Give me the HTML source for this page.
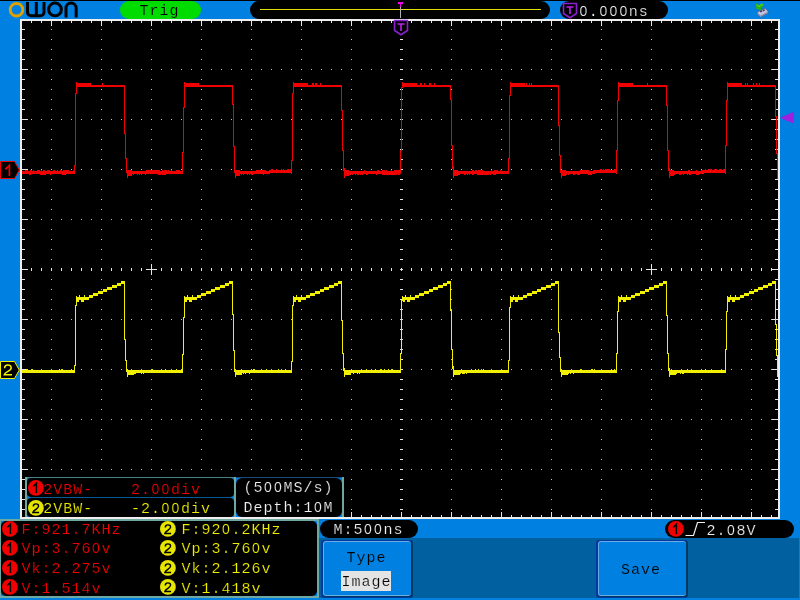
<!DOCTYPE html>
<html><head><meta charset="utf-8"><title>OWON</title>
<style>
html,body{margin:0;padding:0;}
body{width:800px;height:600px;overflow:hidden;background:#0080E0;position:relative;font-family:"Liberation Mono",monospace;font-size:16px;line-height:16px;}
div,span,svg{position:absolute;box-sizing:border-box;}
.t{margin-top:1px;white-space:pre;font-size:15px;letter-spacing:1px;line-height:16px;height:16px;transform:translateZ(0);}
.z{line-height:0;font-style:normal;font-family:"Liberation Sans",sans-serif;font-size:14px;display:inline-block;width:9px;letter-spacing:0;text-align:center;margin-right:1px;}
.pill{background:#000;border-radius:9px;height:18px;}
.frame{left:20px;top:19px;width:760px;height:500px;background:#000;border:2px solid #EEEEEE;}
.plot{left:0;top:0;}
.circ{width:16px;height:16px;border-radius:8px;font-family:"Liberation Sans",sans-serif;font-size:15px;line-height:16px;text-align:center;color:#000;}
.c1{background:#F00000;}
.c2{background:#E8E800;}
.red{color:#F00000;-webkit-text-stroke:0.2px #000;}
.yel{color:#F0F000;-webkit-text-stroke:0.2px #000;}
.wht{color:#F0F0F0;-webkit-text-stroke:0.2px #000;}
.teal{background:#6FA8A0;}
.blk{background:#000;border-radius:5px;}
.btn{background:#0080E0;border-radius:3px;border-top:2px solid #58A8F0;border-left:2px solid #58A8F0;border-right:2px solid #003C80;border-bottom:2px solid #003C80;}
</style></head><body>
<!-- top line -->
<div style="left:0;top:0;width:800px;height:1px;background:#000"></div>

<!-- frame -->
<div class="frame"></div>
<svg class="plot" width="800" height="600" viewBox="0 0 800 600" shape-rendering="crispEdges">
<path fill="#C4C4C4" d="M51 29h1v1h-1zM51 39h1v1h-1zM51 49h1v1h-1zM51 59h1v1h-1zM51 69h1v1h-1zM51 79h1v1h-1zM51 89h1v1h-1zM51 99h1v1h-1zM51 109h1v1h-1zM51 119h1v1h-1zM51 129h1v1h-1zM51 139h1v1h-1zM51 149h1v1h-1zM51 159h1v1h-1zM51 169h1v1h-1zM51 179h1v1h-1zM51 189h1v1h-1zM51 199h1v1h-1zM51 209h1v1h-1zM51 219h1v1h-1zM51 229h1v1h-1zM51 239h1v1h-1zM51 249h1v1h-1zM51 259h1v1h-1zM51 279h1v1h-1zM51 289h1v1h-1zM51 299h1v1h-1zM51 309h1v1h-1zM51 319h1v1h-1zM51 329h1v1h-1zM51 339h1v1h-1zM51 349h1v1h-1zM51 359h1v1h-1zM51 369h1v1h-1zM51 379h1v1h-1zM51 389h1v1h-1zM51 399h1v1h-1zM51 409h1v1h-1zM51 419h1v1h-1zM51 429h1v1h-1zM51 439h1v1h-1zM51 449h1v1h-1zM51 459h1v1h-1zM51 469h1v1h-1zM51 479h1v1h-1zM51 489h1v1h-1zM51 499h1v1h-1zM51 509h1v1h-1zM101 29h1v1h-1zM101 39h1v1h-1zM101 49h1v1h-1zM101 59h1v1h-1zM101 69h1v1h-1zM101 79h1v1h-1zM101 89h1v1h-1zM101 99h1v1h-1zM101 109h1v1h-1zM101 119h1v1h-1zM101 129h1v1h-1zM101 139h1v1h-1zM101 149h1v1h-1zM101 159h1v1h-1zM101 169h1v1h-1zM101 179h1v1h-1zM101 189h1v1h-1zM101 199h1v1h-1zM101 209h1v1h-1zM101 219h1v1h-1zM101 229h1v1h-1zM101 239h1v1h-1zM101 249h1v1h-1zM101 259h1v1h-1zM101 279h1v1h-1zM101 289h1v1h-1zM101 299h1v1h-1zM101 309h1v1h-1zM101 319h1v1h-1zM101 329h1v1h-1zM101 339h1v1h-1zM101 349h1v1h-1zM101 359h1v1h-1zM101 369h1v1h-1zM101 379h1v1h-1zM101 389h1v1h-1zM101 399h1v1h-1zM101 409h1v1h-1zM101 419h1v1h-1zM101 429h1v1h-1zM101 439h1v1h-1zM101 449h1v1h-1zM101 459h1v1h-1zM101 469h1v1h-1zM101 479h1v1h-1zM101 489h1v1h-1zM101 499h1v1h-1zM101 509h1v1h-1zM151 29h1v1h-1zM151 39h1v1h-1zM151 49h1v1h-1zM151 59h1v1h-1zM151 69h1v1h-1zM151 79h1v1h-1zM151 89h1v1h-1zM151 99h1v1h-1zM151 109h1v1h-1zM151 119h1v1h-1zM151 129h1v1h-1zM151 139h1v1h-1zM151 149h1v1h-1zM151 159h1v1h-1zM151 169h1v1h-1zM151 179h1v1h-1zM151 189h1v1h-1zM151 199h1v1h-1zM151 209h1v1h-1zM151 219h1v1h-1zM151 229h1v1h-1zM151 239h1v1h-1zM151 249h1v1h-1zM151 259h1v1h-1zM151 279h1v1h-1zM151 289h1v1h-1zM151 299h1v1h-1zM151 309h1v1h-1zM151 319h1v1h-1zM151 329h1v1h-1zM151 339h1v1h-1zM151 349h1v1h-1zM151 359h1v1h-1zM151 369h1v1h-1zM151 379h1v1h-1zM151 389h1v1h-1zM151 399h1v1h-1zM151 409h1v1h-1zM151 419h1v1h-1zM151 429h1v1h-1zM151 439h1v1h-1zM151 449h1v1h-1zM151 459h1v1h-1zM151 469h1v1h-1zM151 479h1v1h-1zM151 489h1v1h-1zM151 499h1v1h-1zM151 509h1v1h-1zM201 29h1v1h-1zM201 39h1v1h-1zM201 49h1v1h-1zM201 59h1v1h-1zM201 69h1v1h-1zM201 79h1v1h-1zM201 89h1v1h-1zM201 99h1v1h-1zM201 109h1v1h-1zM201 119h1v1h-1zM201 129h1v1h-1zM201 139h1v1h-1zM201 149h1v1h-1zM201 159h1v1h-1zM201 169h1v1h-1zM201 179h1v1h-1zM201 189h1v1h-1zM201 199h1v1h-1zM201 209h1v1h-1zM201 219h1v1h-1zM201 229h1v1h-1zM201 239h1v1h-1zM201 249h1v1h-1zM201 259h1v1h-1zM201 279h1v1h-1zM201 289h1v1h-1zM201 299h1v1h-1zM201 309h1v1h-1zM201 319h1v1h-1zM201 329h1v1h-1zM201 339h1v1h-1zM201 349h1v1h-1zM201 359h1v1h-1zM201 369h1v1h-1zM201 379h1v1h-1zM201 389h1v1h-1zM201 399h1v1h-1zM201 409h1v1h-1zM201 419h1v1h-1zM201 429h1v1h-1zM201 439h1v1h-1zM201 449h1v1h-1zM201 459h1v1h-1zM201 469h1v1h-1zM201 479h1v1h-1zM201 489h1v1h-1zM201 499h1v1h-1zM201 509h1v1h-1zM251 29h1v1h-1zM251 39h1v1h-1zM251 49h1v1h-1zM251 59h1v1h-1zM251 69h1v1h-1zM251 79h1v1h-1zM251 89h1v1h-1zM251 99h1v1h-1zM251 109h1v1h-1zM251 119h1v1h-1zM251 129h1v1h-1zM251 139h1v1h-1zM251 149h1v1h-1zM251 159h1v1h-1zM251 169h1v1h-1zM251 179h1v1h-1zM251 189h1v1h-1zM251 199h1v1h-1zM251 209h1v1h-1zM251 219h1v1h-1zM251 229h1v1h-1zM251 239h1v1h-1zM251 249h1v1h-1zM251 259h1v1h-1zM251 279h1v1h-1zM251 289h1v1h-1zM251 299h1v1h-1zM251 309h1v1h-1zM251 319h1v1h-1zM251 329h1v1h-1zM251 339h1v1h-1zM251 349h1v1h-1zM251 359h1v1h-1zM251 369h1v1h-1zM251 379h1v1h-1zM251 389h1v1h-1zM251 399h1v1h-1zM251 409h1v1h-1zM251 419h1v1h-1zM251 429h1v1h-1zM251 439h1v1h-1zM251 449h1v1h-1zM251 459h1v1h-1zM251 469h1v1h-1zM251 479h1v1h-1zM251 489h1v1h-1zM251 499h1v1h-1zM251 509h1v1h-1zM301 29h1v1h-1zM301 39h1v1h-1zM301 49h1v1h-1zM301 59h1v1h-1zM301 69h1v1h-1zM301 79h1v1h-1zM301 89h1v1h-1zM301 99h1v1h-1zM301 109h1v1h-1zM301 119h1v1h-1zM301 129h1v1h-1zM301 139h1v1h-1zM301 149h1v1h-1zM301 159h1v1h-1zM301 169h1v1h-1zM301 179h1v1h-1zM301 189h1v1h-1zM301 199h1v1h-1zM301 209h1v1h-1zM301 219h1v1h-1zM301 229h1v1h-1zM301 239h1v1h-1zM301 249h1v1h-1zM301 259h1v1h-1zM301 279h1v1h-1zM301 289h1v1h-1zM301 299h1v1h-1zM301 309h1v1h-1zM301 319h1v1h-1zM301 329h1v1h-1zM301 339h1v1h-1zM301 349h1v1h-1zM301 359h1v1h-1zM301 369h1v1h-1zM301 379h1v1h-1zM301 389h1v1h-1zM301 399h1v1h-1zM301 409h1v1h-1zM301 419h1v1h-1zM301 429h1v1h-1zM301 439h1v1h-1zM301 449h1v1h-1zM301 459h1v1h-1zM301 469h1v1h-1zM301 479h1v1h-1zM301 489h1v1h-1zM301 499h1v1h-1zM301 509h1v1h-1zM351 29h1v1h-1zM351 39h1v1h-1zM351 49h1v1h-1zM351 59h1v1h-1zM351 69h1v1h-1zM351 79h1v1h-1zM351 89h1v1h-1zM351 99h1v1h-1zM351 109h1v1h-1zM351 119h1v1h-1zM351 129h1v1h-1zM351 139h1v1h-1zM351 149h1v1h-1zM351 159h1v1h-1zM351 169h1v1h-1zM351 179h1v1h-1zM351 189h1v1h-1zM351 199h1v1h-1zM351 209h1v1h-1zM351 219h1v1h-1zM351 229h1v1h-1zM351 239h1v1h-1zM351 249h1v1h-1zM351 259h1v1h-1zM351 279h1v1h-1zM351 289h1v1h-1zM351 299h1v1h-1zM351 309h1v1h-1zM351 319h1v1h-1zM351 329h1v1h-1zM351 339h1v1h-1zM351 349h1v1h-1zM351 359h1v1h-1zM351 369h1v1h-1zM351 379h1v1h-1zM351 389h1v1h-1zM351 399h1v1h-1zM351 409h1v1h-1zM351 419h1v1h-1zM351 429h1v1h-1zM351 439h1v1h-1zM351 449h1v1h-1zM351 459h1v1h-1zM351 469h1v1h-1zM351 479h1v1h-1zM351 489h1v1h-1zM351 499h1v1h-1zM351 509h1v1h-1zM451 29h1v1h-1zM451 39h1v1h-1zM451 49h1v1h-1zM451 59h1v1h-1zM451 69h1v1h-1zM451 79h1v1h-1zM451 89h1v1h-1zM451 99h1v1h-1zM451 109h1v1h-1zM451 119h1v1h-1zM451 129h1v1h-1zM451 139h1v1h-1zM451 149h1v1h-1zM451 159h1v1h-1zM451 169h1v1h-1zM451 179h1v1h-1zM451 189h1v1h-1zM451 199h1v1h-1zM451 209h1v1h-1zM451 219h1v1h-1zM451 229h1v1h-1zM451 239h1v1h-1zM451 249h1v1h-1zM451 259h1v1h-1zM451 279h1v1h-1zM451 289h1v1h-1zM451 299h1v1h-1zM451 309h1v1h-1zM451 319h1v1h-1zM451 329h1v1h-1zM451 339h1v1h-1zM451 349h1v1h-1zM451 359h1v1h-1zM451 369h1v1h-1zM451 379h1v1h-1zM451 389h1v1h-1zM451 399h1v1h-1zM451 409h1v1h-1zM451 419h1v1h-1zM451 429h1v1h-1zM451 439h1v1h-1zM451 449h1v1h-1zM451 459h1v1h-1zM451 469h1v1h-1zM451 479h1v1h-1zM451 489h1v1h-1zM451 499h1v1h-1zM451 509h1v1h-1zM501 29h1v1h-1zM501 39h1v1h-1zM501 49h1v1h-1zM501 59h1v1h-1zM501 69h1v1h-1zM501 79h1v1h-1zM501 89h1v1h-1zM501 99h1v1h-1zM501 109h1v1h-1zM501 119h1v1h-1zM501 129h1v1h-1zM501 139h1v1h-1zM501 149h1v1h-1zM501 159h1v1h-1zM501 169h1v1h-1zM501 179h1v1h-1zM501 189h1v1h-1zM501 199h1v1h-1zM501 209h1v1h-1zM501 219h1v1h-1zM501 229h1v1h-1zM501 239h1v1h-1zM501 249h1v1h-1zM501 259h1v1h-1zM501 279h1v1h-1zM501 289h1v1h-1zM501 299h1v1h-1zM501 309h1v1h-1zM501 319h1v1h-1zM501 329h1v1h-1zM501 339h1v1h-1zM501 349h1v1h-1zM501 359h1v1h-1zM501 369h1v1h-1zM501 379h1v1h-1zM501 389h1v1h-1zM501 399h1v1h-1zM501 409h1v1h-1zM501 419h1v1h-1zM501 429h1v1h-1zM501 439h1v1h-1zM501 449h1v1h-1zM501 459h1v1h-1zM501 469h1v1h-1zM501 479h1v1h-1zM501 489h1v1h-1zM501 499h1v1h-1zM501 509h1v1h-1zM551 29h1v1h-1zM551 39h1v1h-1zM551 49h1v1h-1zM551 59h1v1h-1zM551 69h1v1h-1zM551 79h1v1h-1zM551 89h1v1h-1zM551 99h1v1h-1zM551 109h1v1h-1zM551 119h1v1h-1zM551 129h1v1h-1zM551 139h1v1h-1zM551 149h1v1h-1zM551 159h1v1h-1zM551 169h1v1h-1zM551 179h1v1h-1zM551 189h1v1h-1zM551 199h1v1h-1zM551 209h1v1h-1zM551 219h1v1h-1zM551 229h1v1h-1zM551 239h1v1h-1zM551 249h1v1h-1zM551 259h1v1h-1zM551 279h1v1h-1zM551 289h1v1h-1zM551 299h1v1h-1zM551 309h1v1h-1zM551 319h1v1h-1zM551 329h1v1h-1zM551 339h1v1h-1zM551 349h1v1h-1zM551 359h1v1h-1zM551 369h1v1h-1zM551 379h1v1h-1zM551 389h1v1h-1zM551 399h1v1h-1zM551 409h1v1h-1zM551 419h1v1h-1zM551 429h1v1h-1zM551 439h1v1h-1zM551 449h1v1h-1zM551 459h1v1h-1zM551 469h1v1h-1zM551 479h1v1h-1zM551 489h1v1h-1zM551 499h1v1h-1zM551 509h1v1h-1zM601 29h1v1h-1zM601 39h1v1h-1zM601 49h1v1h-1zM601 59h1v1h-1zM601 69h1v1h-1zM601 79h1v1h-1zM601 89h1v1h-1zM601 99h1v1h-1zM601 109h1v1h-1zM601 119h1v1h-1zM601 129h1v1h-1zM601 139h1v1h-1zM601 149h1v1h-1zM601 159h1v1h-1zM601 169h1v1h-1zM601 179h1v1h-1zM601 189h1v1h-1zM601 199h1v1h-1zM601 209h1v1h-1zM601 219h1v1h-1zM601 229h1v1h-1zM601 239h1v1h-1zM601 249h1v1h-1zM601 259h1v1h-1zM601 279h1v1h-1zM601 289h1v1h-1zM601 299h1v1h-1zM601 309h1v1h-1zM601 319h1v1h-1zM601 329h1v1h-1zM601 339h1v1h-1zM601 349h1v1h-1zM601 359h1v1h-1zM601 369h1v1h-1zM601 379h1v1h-1zM601 389h1v1h-1zM601 399h1v1h-1zM601 409h1v1h-1zM601 419h1v1h-1zM601 429h1v1h-1zM601 439h1v1h-1zM601 449h1v1h-1zM601 459h1v1h-1zM601 469h1v1h-1zM601 479h1v1h-1zM601 489h1v1h-1zM601 499h1v1h-1zM601 509h1v1h-1zM651 29h1v1h-1zM651 39h1v1h-1zM651 49h1v1h-1zM651 59h1v1h-1zM651 69h1v1h-1zM651 79h1v1h-1zM651 89h1v1h-1zM651 99h1v1h-1zM651 109h1v1h-1zM651 119h1v1h-1zM651 129h1v1h-1zM651 139h1v1h-1zM651 149h1v1h-1zM651 159h1v1h-1zM651 169h1v1h-1zM651 179h1v1h-1zM651 189h1v1h-1zM651 199h1v1h-1zM651 209h1v1h-1zM651 219h1v1h-1zM651 229h1v1h-1zM651 239h1v1h-1zM651 249h1v1h-1zM651 259h1v1h-1zM651 279h1v1h-1zM651 289h1v1h-1zM651 299h1v1h-1zM651 309h1v1h-1zM651 319h1v1h-1zM651 329h1v1h-1zM651 339h1v1h-1zM651 349h1v1h-1zM651 359h1v1h-1zM651 369h1v1h-1zM651 379h1v1h-1zM651 389h1v1h-1zM651 399h1v1h-1zM651 409h1v1h-1zM651 419h1v1h-1zM651 429h1v1h-1zM651 439h1v1h-1zM651 449h1v1h-1zM651 459h1v1h-1zM651 469h1v1h-1zM651 479h1v1h-1zM651 489h1v1h-1zM651 499h1v1h-1zM651 509h1v1h-1zM701 29h1v1h-1zM701 39h1v1h-1zM701 49h1v1h-1zM701 59h1v1h-1zM701 69h1v1h-1zM701 79h1v1h-1zM701 89h1v1h-1zM701 99h1v1h-1zM701 109h1v1h-1zM701 119h1v1h-1zM701 129h1v1h-1zM701 139h1v1h-1zM701 149h1v1h-1zM701 159h1v1h-1zM701 169h1v1h-1zM701 179h1v1h-1zM701 189h1v1h-1zM701 199h1v1h-1zM701 209h1v1h-1zM701 219h1v1h-1zM701 229h1v1h-1zM701 239h1v1h-1zM701 249h1v1h-1zM701 259h1v1h-1zM701 279h1v1h-1zM701 289h1v1h-1zM701 299h1v1h-1zM701 309h1v1h-1zM701 319h1v1h-1zM701 329h1v1h-1zM701 339h1v1h-1zM701 349h1v1h-1zM701 359h1v1h-1zM701 369h1v1h-1zM701 379h1v1h-1zM701 389h1v1h-1zM701 399h1v1h-1zM701 409h1v1h-1zM701 419h1v1h-1zM701 429h1v1h-1zM701 439h1v1h-1zM701 449h1v1h-1zM701 459h1v1h-1zM701 469h1v1h-1zM701 479h1v1h-1zM701 489h1v1h-1zM701 499h1v1h-1zM701 509h1v1h-1zM751 29h1v1h-1zM751 39h1v1h-1zM751 49h1v1h-1zM751 59h1v1h-1zM751 69h1v1h-1zM751 79h1v1h-1zM751 89h1v1h-1zM751 99h1v1h-1zM751 109h1v1h-1zM751 119h1v1h-1zM751 129h1v1h-1zM751 139h1v1h-1zM751 149h1v1h-1zM751 159h1v1h-1zM751 169h1v1h-1zM751 179h1v1h-1zM751 189h1v1h-1zM751 199h1v1h-1zM751 209h1v1h-1zM751 219h1v1h-1zM751 229h1v1h-1zM751 239h1v1h-1zM751 249h1v1h-1zM751 259h1v1h-1zM751 279h1v1h-1zM751 289h1v1h-1zM751 299h1v1h-1zM751 309h1v1h-1zM751 319h1v1h-1zM751 329h1v1h-1zM751 339h1v1h-1zM751 349h1v1h-1zM751 359h1v1h-1zM751 369h1v1h-1zM751 379h1v1h-1zM751 389h1v1h-1zM751 399h1v1h-1zM751 409h1v1h-1zM751 419h1v1h-1zM751 429h1v1h-1zM751 439h1v1h-1zM751 449h1v1h-1zM751 459h1v1h-1zM751 469h1v1h-1zM751 479h1v1h-1zM751 489h1v1h-1zM751 499h1v1h-1zM751 509h1v1h-1zM31 69h1v1h-1zM41 69h1v1h-1zM61 69h1v1h-1zM71 69h1v1h-1zM81 69h1v1h-1zM91 69h1v1h-1zM111 69h1v1h-1zM121 69h1v1h-1zM131 69h1v1h-1zM141 69h1v1h-1zM161 69h1v1h-1zM171 69h1v1h-1zM181 69h1v1h-1zM191 69h1v1h-1zM211 69h1v1h-1zM221 69h1v1h-1zM231 69h1v1h-1zM241 69h1v1h-1zM261 69h1v1h-1zM271 69h1v1h-1zM281 69h1v1h-1zM291 69h1v1h-1zM311 69h1v1h-1zM321 69h1v1h-1zM331 69h1v1h-1zM341 69h1v1h-1zM361 69h1v1h-1zM371 69h1v1h-1zM381 69h1v1h-1zM391 69h1v1h-1zM411 69h1v1h-1zM421 69h1v1h-1zM431 69h1v1h-1zM441 69h1v1h-1zM461 69h1v1h-1zM471 69h1v1h-1zM481 69h1v1h-1zM491 69h1v1h-1zM511 69h1v1h-1zM521 69h1v1h-1zM531 69h1v1h-1zM541 69h1v1h-1zM561 69h1v1h-1zM571 69h1v1h-1zM581 69h1v1h-1zM591 69h1v1h-1zM611 69h1v1h-1zM621 69h1v1h-1zM631 69h1v1h-1zM641 69h1v1h-1zM661 69h1v1h-1zM671 69h1v1h-1zM681 69h1v1h-1zM691 69h1v1h-1zM711 69h1v1h-1zM721 69h1v1h-1zM731 69h1v1h-1zM741 69h1v1h-1zM761 69h1v1h-1zM771 69h1v1h-1zM31 119h1v1h-1zM41 119h1v1h-1zM61 119h1v1h-1zM71 119h1v1h-1zM81 119h1v1h-1zM91 119h1v1h-1zM111 119h1v1h-1zM121 119h1v1h-1zM131 119h1v1h-1zM141 119h1v1h-1zM161 119h1v1h-1zM171 119h1v1h-1zM181 119h1v1h-1zM191 119h1v1h-1zM211 119h1v1h-1zM221 119h1v1h-1zM231 119h1v1h-1zM241 119h1v1h-1zM261 119h1v1h-1zM271 119h1v1h-1zM281 119h1v1h-1zM291 119h1v1h-1zM311 119h1v1h-1zM321 119h1v1h-1zM331 119h1v1h-1zM341 119h1v1h-1zM361 119h1v1h-1zM371 119h1v1h-1zM381 119h1v1h-1zM391 119h1v1h-1zM411 119h1v1h-1zM421 119h1v1h-1zM431 119h1v1h-1zM441 119h1v1h-1zM461 119h1v1h-1zM471 119h1v1h-1zM481 119h1v1h-1zM491 119h1v1h-1zM511 119h1v1h-1zM521 119h1v1h-1zM531 119h1v1h-1zM541 119h1v1h-1zM561 119h1v1h-1zM571 119h1v1h-1zM581 119h1v1h-1zM591 119h1v1h-1zM611 119h1v1h-1zM621 119h1v1h-1zM631 119h1v1h-1zM641 119h1v1h-1zM661 119h1v1h-1zM671 119h1v1h-1zM681 119h1v1h-1zM691 119h1v1h-1zM711 119h1v1h-1zM721 119h1v1h-1zM731 119h1v1h-1zM741 119h1v1h-1zM761 119h1v1h-1zM771 119h1v1h-1zM31 169h1v1h-1zM41 169h1v1h-1zM61 169h1v1h-1zM71 169h1v1h-1zM81 169h1v1h-1zM91 169h1v1h-1zM111 169h1v1h-1zM121 169h1v1h-1zM131 169h1v1h-1zM141 169h1v1h-1zM161 169h1v1h-1zM171 169h1v1h-1zM181 169h1v1h-1zM191 169h1v1h-1zM211 169h1v1h-1zM221 169h1v1h-1zM231 169h1v1h-1zM241 169h1v1h-1zM261 169h1v1h-1zM271 169h1v1h-1zM281 169h1v1h-1zM291 169h1v1h-1zM311 169h1v1h-1zM321 169h1v1h-1zM331 169h1v1h-1zM341 169h1v1h-1zM361 169h1v1h-1zM371 169h1v1h-1zM381 169h1v1h-1zM391 169h1v1h-1zM411 169h1v1h-1zM421 169h1v1h-1zM431 169h1v1h-1zM441 169h1v1h-1zM461 169h1v1h-1zM471 169h1v1h-1zM481 169h1v1h-1zM491 169h1v1h-1zM511 169h1v1h-1zM521 169h1v1h-1zM531 169h1v1h-1zM541 169h1v1h-1zM561 169h1v1h-1zM571 169h1v1h-1zM581 169h1v1h-1zM591 169h1v1h-1zM611 169h1v1h-1zM621 169h1v1h-1zM631 169h1v1h-1zM641 169h1v1h-1zM661 169h1v1h-1zM671 169h1v1h-1zM681 169h1v1h-1zM691 169h1v1h-1zM711 169h1v1h-1zM721 169h1v1h-1zM731 169h1v1h-1zM741 169h1v1h-1zM761 169h1v1h-1zM771 169h1v1h-1zM31 219h1v1h-1zM41 219h1v1h-1zM61 219h1v1h-1zM71 219h1v1h-1zM81 219h1v1h-1zM91 219h1v1h-1zM111 219h1v1h-1zM121 219h1v1h-1zM131 219h1v1h-1zM141 219h1v1h-1zM161 219h1v1h-1zM171 219h1v1h-1zM181 219h1v1h-1zM191 219h1v1h-1zM211 219h1v1h-1zM221 219h1v1h-1zM231 219h1v1h-1zM241 219h1v1h-1zM261 219h1v1h-1zM271 219h1v1h-1zM281 219h1v1h-1zM291 219h1v1h-1zM311 219h1v1h-1zM321 219h1v1h-1zM331 219h1v1h-1zM341 219h1v1h-1zM361 219h1v1h-1zM371 219h1v1h-1zM381 219h1v1h-1zM391 219h1v1h-1zM411 219h1v1h-1zM421 219h1v1h-1zM431 219h1v1h-1zM441 219h1v1h-1zM461 219h1v1h-1zM471 219h1v1h-1zM481 219h1v1h-1zM491 219h1v1h-1zM511 219h1v1h-1zM521 219h1v1h-1zM531 219h1v1h-1zM541 219h1v1h-1zM561 219h1v1h-1zM571 219h1v1h-1zM581 219h1v1h-1zM591 219h1v1h-1zM611 219h1v1h-1zM621 219h1v1h-1zM631 219h1v1h-1zM641 219h1v1h-1zM661 219h1v1h-1zM671 219h1v1h-1zM681 219h1v1h-1zM691 219h1v1h-1zM711 219h1v1h-1zM721 219h1v1h-1zM731 219h1v1h-1zM741 219h1v1h-1zM761 219h1v1h-1zM771 219h1v1h-1zM31 319h1v1h-1zM41 319h1v1h-1zM61 319h1v1h-1zM71 319h1v1h-1zM81 319h1v1h-1zM91 319h1v1h-1zM111 319h1v1h-1zM121 319h1v1h-1zM131 319h1v1h-1zM141 319h1v1h-1zM161 319h1v1h-1zM171 319h1v1h-1zM181 319h1v1h-1zM191 319h1v1h-1zM211 319h1v1h-1zM221 319h1v1h-1zM231 319h1v1h-1zM241 319h1v1h-1zM261 319h1v1h-1zM271 319h1v1h-1zM281 319h1v1h-1zM291 319h1v1h-1zM311 319h1v1h-1zM321 319h1v1h-1zM331 319h1v1h-1zM341 319h1v1h-1zM361 319h1v1h-1zM371 319h1v1h-1zM381 319h1v1h-1zM391 319h1v1h-1zM411 319h1v1h-1zM421 319h1v1h-1zM431 319h1v1h-1zM441 319h1v1h-1zM461 319h1v1h-1zM471 319h1v1h-1zM481 319h1v1h-1zM491 319h1v1h-1zM511 319h1v1h-1zM521 319h1v1h-1zM531 319h1v1h-1zM541 319h1v1h-1zM561 319h1v1h-1zM571 319h1v1h-1zM581 319h1v1h-1zM591 319h1v1h-1zM611 319h1v1h-1zM621 319h1v1h-1zM631 319h1v1h-1zM641 319h1v1h-1zM661 319h1v1h-1zM671 319h1v1h-1zM681 319h1v1h-1zM691 319h1v1h-1zM711 319h1v1h-1zM721 319h1v1h-1zM731 319h1v1h-1zM741 319h1v1h-1zM761 319h1v1h-1zM771 319h1v1h-1zM31 369h1v1h-1zM41 369h1v1h-1zM61 369h1v1h-1zM71 369h1v1h-1zM81 369h1v1h-1zM91 369h1v1h-1zM111 369h1v1h-1zM121 369h1v1h-1zM131 369h1v1h-1zM141 369h1v1h-1zM161 369h1v1h-1zM171 369h1v1h-1zM181 369h1v1h-1zM191 369h1v1h-1zM211 369h1v1h-1zM221 369h1v1h-1zM231 369h1v1h-1zM241 369h1v1h-1zM261 369h1v1h-1zM271 369h1v1h-1zM281 369h1v1h-1zM291 369h1v1h-1zM311 369h1v1h-1zM321 369h1v1h-1zM331 369h1v1h-1zM341 369h1v1h-1zM361 369h1v1h-1zM371 369h1v1h-1zM381 369h1v1h-1zM391 369h1v1h-1zM411 369h1v1h-1zM421 369h1v1h-1zM431 369h1v1h-1zM441 369h1v1h-1zM461 369h1v1h-1zM471 369h1v1h-1zM481 369h1v1h-1zM491 369h1v1h-1zM511 369h1v1h-1zM521 369h1v1h-1zM531 369h1v1h-1zM541 369h1v1h-1zM561 369h1v1h-1zM571 369h1v1h-1zM581 369h1v1h-1zM591 369h1v1h-1zM611 369h1v1h-1zM621 369h1v1h-1zM631 369h1v1h-1zM641 369h1v1h-1zM661 369h1v1h-1zM671 369h1v1h-1zM681 369h1v1h-1zM691 369h1v1h-1zM711 369h1v1h-1zM721 369h1v1h-1zM731 369h1v1h-1zM741 369h1v1h-1zM761 369h1v1h-1zM771 369h1v1h-1zM31 419h1v1h-1zM41 419h1v1h-1zM61 419h1v1h-1zM71 419h1v1h-1zM81 419h1v1h-1zM91 419h1v1h-1zM111 419h1v1h-1zM121 419h1v1h-1zM131 419h1v1h-1zM141 419h1v1h-1zM161 419h1v1h-1zM171 419h1v1h-1zM181 419h1v1h-1zM191 419h1v1h-1zM211 419h1v1h-1zM221 419h1v1h-1zM231 419h1v1h-1zM241 419h1v1h-1zM261 419h1v1h-1zM271 419h1v1h-1zM281 419h1v1h-1zM291 419h1v1h-1zM311 419h1v1h-1zM321 419h1v1h-1zM331 419h1v1h-1zM341 419h1v1h-1zM361 419h1v1h-1zM371 419h1v1h-1zM381 419h1v1h-1zM391 419h1v1h-1zM411 419h1v1h-1zM421 419h1v1h-1zM431 419h1v1h-1zM441 419h1v1h-1zM461 419h1v1h-1zM471 419h1v1h-1zM481 419h1v1h-1zM491 419h1v1h-1zM511 419h1v1h-1zM521 419h1v1h-1zM531 419h1v1h-1zM541 419h1v1h-1zM561 419h1v1h-1zM571 419h1v1h-1zM581 419h1v1h-1zM591 419h1v1h-1zM611 419h1v1h-1zM621 419h1v1h-1zM631 419h1v1h-1zM641 419h1v1h-1zM661 419h1v1h-1zM671 419h1v1h-1zM681 419h1v1h-1zM691 419h1v1h-1zM711 419h1v1h-1zM721 419h1v1h-1zM731 419h1v1h-1zM741 419h1v1h-1zM761 419h1v1h-1zM771 419h1v1h-1zM31 469h1v1h-1zM41 469h1v1h-1zM61 469h1v1h-1zM71 469h1v1h-1zM81 469h1v1h-1zM91 469h1v1h-1zM111 469h1v1h-1zM121 469h1v1h-1zM131 469h1v1h-1zM141 469h1v1h-1zM161 469h1v1h-1zM171 469h1v1h-1zM181 469h1v1h-1zM191 469h1v1h-1zM211 469h1v1h-1zM221 469h1v1h-1zM231 469h1v1h-1zM241 469h1v1h-1zM261 469h1v1h-1zM271 469h1v1h-1zM281 469h1v1h-1zM291 469h1v1h-1zM311 469h1v1h-1zM321 469h1v1h-1zM331 469h1v1h-1zM341 469h1v1h-1zM361 469h1v1h-1zM371 469h1v1h-1zM381 469h1v1h-1zM391 469h1v1h-1zM411 469h1v1h-1zM421 469h1v1h-1zM431 469h1v1h-1zM441 469h1v1h-1zM461 469h1v1h-1zM471 469h1v1h-1zM481 469h1v1h-1zM491 469h1v1h-1zM511 469h1v1h-1zM521 469h1v1h-1zM531 469h1v1h-1zM541 469h1v1h-1zM561 469h1v1h-1zM571 469h1v1h-1zM581 469h1v1h-1zM591 469h1v1h-1zM611 469h1v1h-1zM621 469h1v1h-1zM631 469h1v1h-1zM641 469h1v1h-1zM661 469h1v1h-1zM671 469h1v1h-1zM681 469h1v1h-1zM691 469h1v1h-1zM711 469h1v1h-1zM721 469h1v1h-1zM731 469h1v1h-1zM741 469h1v1h-1zM761 469h1v1h-1zM771 469h1v1h-1z"/>
<path fill="#E6E6E6" d="M31 21h1v2h-1zM31 515h1v2h-1zM41 21h1v2h-1zM41 515h1v2h-1zM51 21h1v5h-1zM51 512h1v5h-1zM61 21h1v2h-1zM61 515h1v2h-1zM71 21h1v2h-1zM71 515h1v2h-1zM81 21h1v2h-1zM81 515h1v2h-1zM91 21h1v2h-1zM91 515h1v2h-1zM101 21h1v5h-1zM101 512h1v5h-1zM111 21h1v2h-1zM111 515h1v2h-1zM121 21h1v2h-1zM121 515h1v2h-1zM131 21h1v2h-1zM131 515h1v2h-1zM141 21h1v2h-1zM141 515h1v2h-1zM151 21h1v5h-1zM151 512h1v5h-1zM161 21h1v2h-1zM161 515h1v2h-1zM171 21h1v2h-1zM171 515h1v2h-1zM181 21h1v2h-1zM181 515h1v2h-1zM191 21h1v2h-1zM191 515h1v2h-1zM201 21h1v5h-1zM201 512h1v5h-1zM211 21h1v2h-1zM211 515h1v2h-1zM221 21h1v2h-1zM221 515h1v2h-1zM231 21h1v2h-1zM231 515h1v2h-1zM241 21h1v2h-1zM241 515h1v2h-1zM251 21h1v5h-1zM251 512h1v5h-1zM261 21h1v2h-1zM261 515h1v2h-1zM271 21h1v2h-1zM271 515h1v2h-1zM281 21h1v2h-1zM281 515h1v2h-1zM291 21h1v2h-1zM291 515h1v2h-1zM301 21h1v5h-1zM301 512h1v5h-1zM311 21h1v2h-1zM311 515h1v2h-1zM321 21h1v2h-1zM321 515h1v2h-1zM331 21h1v2h-1zM331 515h1v2h-1zM341 21h1v2h-1zM341 515h1v2h-1zM351 21h1v5h-1zM351 512h1v5h-1zM361 21h1v2h-1zM361 515h1v2h-1zM371 21h1v2h-1zM371 515h1v2h-1zM381 21h1v2h-1zM381 515h1v2h-1zM391 21h1v2h-1zM391 515h1v2h-1zM401 21h1v5h-1zM401 512h1v5h-1zM411 21h1v2h-1zM411 515h1v2h-1zM421 21h1v2h-1zM421 515h1v2h-1zM431 21h1v2h-1zM431 515h1v2h-1zM441 21h1v2h-1zM441 515h1v2h-1zM451 21h1v5h-1zM451 512h1v5h-1zM461 21h1v2h-1zM461 515h1v2h-1zM471 21h1v2h-1zM471 515h1v2h-1zM481 21h1v2h-1zM481 515h1v2h-1zM491 21h1v2h-1zM491 515h1v2h-1zM501 21h1v5h-1zM501 512h1v5h-1zM511 21h1v2h-1zM511 515h1v2h-1zM521 21h1v2h-1zM521 515h1v2h-1zM531 21h1v2h-1zM531 515h1v2h-1zM541 21h1v2h-1zM541 515h1v2h-1zM551 21h1v5h-1zM551 512h1v5h-1zM561 21h1v2h-1zM561 515h1v2h-1zM571 21h1v2h-1zM571 515h1v2h-1zM581 21h1v2h-1zM581 515h1v2h-1zM591 21h1v2h-1zM591 515h1v2h-1zM601 21h1v5h-1zM601 512h1v5h-1zM611 21h1v2h-1zM611 515h1v2h-1zM621 21h1v2h-1zM621 515h1v2h-1zM631 21h1v2h-1zM631 515h1v2h-1zM641 21h1v2h-1zM641 515h1v2h-1zM651 21h1v5h-1zM651 512h1v5h-1zM661 21h1v2h-1zM661 515h1v2h-1zM671 21h1v2h-1zM671 515h1v2h-1zM681 21h1v2h-1zM681 515h1v2h-1zM691 21h1v2h-1zM691 515h1v2h-1zM701 21h1v5h-1zM701 512h1v5h-1zM711 21h1v2h-1zM711 515h1v2h-1zM721 21h1v2h-1zM721 515h1v2h-1zM731 21h1v2h-1zM731 515h1v2h-1zM741 21h1v2h-1zM741 515h1v2h-1zM751 21h1v5h-1zM751 512h1v5h-1zM761 21h1v2h-1zM761 515h1v2h-1zM771 21h1v2h-1zM771 515h1v2h-1zM22 29h3v1h-3zM775 29h3v1h-3zM22 39h3v1h-3zM775 39h3v1h-3zM22 49h3v1h-3zM775 49h3v1h-3zM22 59h3v1h-3zM775 59h3v1h-3zM22 69h6v1h-6zM772 69h6v1h-6zM22 79h3v1h-3zM775 79h3v1h-3zM22 89h3v1h-3zM775 89h3v1h-3zM22 99h3v1h-3zM775 99h3v1h-3zM22 109h3v1h-3zM775 109h3v1h-3zM22 119h6v1h-6zM772 119h6v1h-6zM22 129h3v1h-3zM775 129h3v1h-3zM22 139h3v1h-3zM775 139h3v1h-3zM22 149h3v1h-3zM775 149h3v1h-3zM22 159h3v1h-3zM775 159h3v1h-3zM22 169h6v1h-6zM772 169h6v1h-6zM22 179h3v1h-3zM775 179h3v1h-3zM22 189h3v1h-3zM775 189h3v1h-3zM22 199h3v1h-3zM775 199h3v1h-3zM22 209h3v1h-3zM775 209h3v1h-3zM22 219h6v1h-6zM772 219h6v1h-6zM22 229h3v1h-3zM775 229h3v1h-3zM22 239h3v1h-3zM775 239h3v1h-3zM22 249h3v1h-3zM775 249h3v1h-3zM22 259h3v1h-3zM775 259h3v1h-3zM22 269h6v1h-6zM772 269h6v1h-6zM22 279h3v1h-3zM775 279h3v1h-3zM22 289h3v1h-3zM775 289h3v1h-3zM22 299h3v1h-3zM775 299h3v1h-3zM22 309h3v1h-3zM775 309h3v1h-3zM22 319h6v1h-6zM772 319h6v1h-6zM22 329h3v1h-3zM775 329h3v1h-3zM22 339h3v1h-3zM775 339h3v1h-3zM22 349h3v1h-3zM775 349h3v1h-3zM22 359h3v1h-3zM775 359h3v1h-3zM22 369h6v1h-6zM772 369h6v1h-6zM22 379h3v1h-3zM775 379h3v1h-3zM22 389h3v1h-3zM775 389h3v1h-3zM22 399h3v1h-3zM775 399h3v1h-3zM22 409h3v1h-3zM775 409h3v1h-3zM22 419h6v1h-6zM772 419h6v1h-6zM22 429h3v1h-3zM775 429h3v1h-3zM22 439h3v1h-3zM775 439h3v1h-3zM22 449h3v1h-3zM775 449h3v1h-3zM22 459h3v1h-3zM775 459h3v1h-3zM22 469h6v1h-6zM772 469h6v1h-6zM22 479h3v1h-3zM775 479h3v1h-3zM22 489h3v1h-3zM775 489h3v1h-3zM22 499h3v1h-3zM775 499h3v1h-3zM22 509h3v1h-3zM775 509h3v1h-3zM31 268h1v3h-1zM41 268h1v3h-1zM51 268h1v3h-1zM61 268h1v3h-1zM71 268h1v3h-1zM81 268h1v3h-1zM91 268h1v3h-1zM101 268h1v3h-1zM111 268h1v3h-1zM121 268h1v3h-1zM131 268h1v3h-1zM141 268h1v3h-1zM161 268h1v3h-1zM171 268h1v3h-1zM181 268h1v3h-1zM191 268h1v3h-1zM201 268h1v3h-1zM211 268h1v3h-1zM221 268h1v3h-1zM231 268h1v3h-1zM241 268h1v3h-1zM251 268h1v3h-1zM261 268h1v3h-1zM271 268h1v3h-1zM281 268h1v3h-1zM291 268h1v3h-1zM301 268h1v3h-1zM311 268h1v3h-1zM321 268h1v3h-1zM331 268h1v3h-1zM341 268h1v3h-1zM351 268h1v3h-1zM361 268h1v3h-1zM371 268h1v3h-1zM381 268h1v3h-1zM391 268h1v3h-1zM411 268h1v3h-1zM421 268h1v3h-1zM431 268h1v3h-1zM441 268h1v3h-1zM451 268h1v3h-1zM461 268h1v3h-1zM471 268h1v3h-1zM481 268h1v3h-1zM491 268h1v3h-1zM501 268h1v3h-1zM511 268h1v3h-1zM521 268h1v3h-1zM531 268h1v3h-1zM541 268h1v3h-1zM551 268h1v3h-1zM561 268h1v3h-1zM571 268h1v3h-1zM581 268h1v3h-1zM591 268h1v3h-1zM601 268h1v3h-1zM611 268h1v3h-1zM621 268h1v3h-1zM631 268h1v3h-1zM641 268h1v3h-1zM661 268h1v3h-1zM671 268h1v3h-1zM681 268h1v3h-1zM691 268h1v3h-1zM701 268h1v3h-1zM711 268h1v3h-1zM721 268h1v3h-1zM731 268h1v3h-1zM741 268h1v3h-1zM751 268h1v3h-1zM761 268h1v3h-1zM771 268h1v3h-1zM400 29h3v1h-3zM400 39h3v1h-3zM400 49h3v1h-3zM400 59h3v1h-3zM400 69h3v1h-3zM400 79h3v1h-3zM400 89h3v1h-3zM400 99h3v1h-3zM400 109h3v1h-3zM400 119h3v1h-3zM400 129h3v1h-3zM400 139h3v1h-3zM400 149h3v1h-3zM400 159h3v1h-3zM400 169h3v1h-3zM400 179h3v1h-3zM400 189h3v1h-3zM400 199h3v1h-3zM400 209h3v1h-3zM400 219h3v1h-3zM400 229h3v1h-3zM400 239h3v1h-3zM400 249h3v1h-3zM400 259h3v1h-3zM400 279h3v1h-3zM400 289h3v1h-3zM400 299h3v1h-3zM400 309h3v1h-3zM400 319h3v1h-3zM400 329h3v1h-3zM400 339h3v1h-3zM400 349h3v1h-3zM400 359h3v1h-3zM400 369h3v1h-3zM400 379h3v1h-3zM400 389h3v1h-3zM400 399h3v1h-3zM400 409h3v1h-3zM400 419h3v1h-3zM400 429h3v1h-3zM400 439h3v1h-3zM400 449h3v1h-3zM400 459h3v1h-3zM400 469h3v1h-3zM400 479h3v1h-3zM400 489h3v1h-3zM400 499h3v1h-3zM400 509h3v1h-3zM400 269h3v1h-3zM401 268h1v3h-1zM146 269h11v1h-11zM151 264h1v11h-1zM646 269h11v1h-11zM651 264h1v11h-1z"/>
<path fill="#F00000" d="M22 171h1v3h-1zM23 171h1v3h-1zM24 171h1v3h-1zM25 170h1v4h-1zM26 170h1v4h-1zM27 170h1v4h-1zM28 171h1v3h-1zM29 171h1v4h-1zM30 170h1v5h-1zM31 170h1v4h-1zM32 171h1v3h-1zM33 170h1v4h-1zM34 171h1v3h-1zM35 171h1v3h-1zM36 171h1v3h-1zM37 170h1v4h-1zM38 170h1v4h-1zM39 170h1v4h-1zM40 171h1v4h-1zM41 170h1v5h-1zM42 171h1v4h-1zM43 170h1v5h-1zM44 170h1v5h-1zM45 171h1v4h-1zM46 171h1v3h-1zM47 170h1v4h-1zM48 170h1v4h-1zM49 170h1v4h-1zM50 171h1v4h-1zM51 171h1v3h-1zM52 171h1v3h-1zM53 170h1v4h-1zM54 170h1v4h-1zM55 171h1v3h-1zM56 171h1v3h-1zM57 170h1v4h-1zM58 171h1v3h-1zM59 171h1v3h-1zM60 170h1v4h-1zM61 170h1v4h-1zM62 171h1v4h-1zM63 170h1v5h-1zM64 170h1v5h-1zM65 170h1v5h-1zM66 170h1v4h-1zM67 170h1v4h-1zM68 170h1v4h-1zM69 171h1v3h-1zM70 171h1v3h-1zM71 171h1v3h-1zM72 171h1v3h-1zM73 170h1v4h-1zM74 165h1v9h-1zM75 93h1v73h-1zM76 82h1v12h-1zM77 83h1v4h-1zM78 83h1v4h-1zM79 83h1v4h-1zM80 83h1v4h-1zM81 83h1v4h-1zM82 83h1v4h-1zM83 83h1v4h-1zM84 83h1v4h-1zM85 83h1v4h-1zM86 83h1v4h-1zM87 83h1v4h-1zM88 83h1v4h-1zM89 83h1v4h-1zM90 83h1v4h-1zM91 85h1v2h-1zM92 85h1v2h-1zM93 85h1v2h-1zM94 85h1v2h-1zM95 85h1v2h-1zM96 85h1v2h-1zM97 85h1v2h-1zM98 85h1v2h-1zM99 85h1v2h-1zM100 85h1v2h-1zM101 85h1v2h-1zM102 83h1v4h-1zM103 85h1v2h-1zM104 85h1v2h-1zM105 85h1v2h-1zM106 85h1v2h-1zM107 85h1v2h-1zM108 85h1v2h-1zM109 85h1v2h-1zM110 85h1v2h-1zM111 85h1v2h-1zM112 85h1v2h-1zM113 85h1v2h-1zM114 85h1v2h-1zM115 85h1v2h-1zM116 85h1v2h-1zM117 85h1v2h-1zM118 85h1v2h-1zM119 85h1v2h-1zM120 85h1v2h-1zM121 85h1v2h-1zM122 85h1v2h-1zM123 85h1v2h-1zM124 85h1v49h-1zM125 133h1v26h-1zM126 158h1v15h-1zM127 170h1v8h-1zM128 170h1v6h-1zM129 170h1v6h-1zM130 170h1v6h-1zM131 170h1v6h-1zM132 171h1v3h-1zM133 171h1v4h-1zM134 171h1v3h-1zM135 171h1v3h-1zM136 171h1v3h-1zM137 171h1v4h-1zM138 171h1v3h-1zM139 171h1v4h-1zM140 171h1v3h-1zM141 171h1v4h-1zM142 171h1v3h-1zM143 171h1v3h-1zM144 171h1v3h-1zM145 171h1v4h-1zM146 170h1v4h-1zM147 170h1v4h-1zM148 170h1v4h-1zM149 170h1v4h-1zM150 170h1v4h-1zM151 170h1v4h-1zM152 170h1v4h-1zM153 170h1v4h-1zM154 170h1v4h-1zM155 170h1v4h-1zM156 170h1v4h-1zM157 170h1v4h-1zM158 170h1v5h-1zM159 170h1v5h-1zM160 171h1v4h-1zM161 171h1v3h-1zM162 170h1v5h-1zM163 171h1v4h-1zM164 170h1v5h-1zM165 170h1v5h-1zM166 170h1v4h-1zM167 171h1v3h-1zM168 170h1v4h-1zM169 171h1v3h-1zM170 171h1v3h-1zM171 170h1v4h-1zM172 171h1v3h-1zM173 171h1v3h-1zM174 171h1v3h-1zM175 171h1v3h-1zM176 170h1v4h-1zM177 170h1v4h-1zM178 170h1v4h-1zM179 170h1v4h-1zM180 171h1v3h-1zM181 171h1v3h-1zM182 152h1v22h-1zM183 107h1v46h-1zM184 82h1v26h-1zM185 83h1v4h-1zM186 83h1v4h-1zM187 83h1v4h-1zM188 83h1v4h-1zM189 83h1v4h-1zM190 83h1v4h-1zM191 83h1v4h-1zM192 83h1v4h-1zM193 83h1v4h-1zM194 83h1v4h-1zM195 83h1v4h-1zM196 83h1v4h-1zM197 83h1v4h-1zM198 83h1v4h-1zM199 85h1v2h-1zM200 85h1v2h-1zM201 85h1v2h-1zM202 85h1v2h-1zM203 85h1v2h-1zM204 85h1v2h-1zM205 85h1v2h-1zM206 85h1v2h-1zM207 85h1v2h-1zM208 85h1v2h-1zM209 85h1v2h-1zM210 85h1v2h-1zM211 85h1v2h-1zM212 85h1v2h-1zM213 85h1v2h-1zM214 85h1v2h-1zM215 85h1v2h-1zM216 85h1v2h-1zM217 85h1v2h-1zM218 85h1v2h-1zM219 85h1v2h-1zM220 85h1v2h-1zM221 85h1v2h-1zM222 85h1v2h-1zM223 85h1v2h-1zM224 85h1v2h-1zM225 85h1v2h-1zM226 85h1v2h-1zM227 85h1v2h-1zM228 85h1v2h-1zM229 85h1v2h-1zM230 85h1v2h-1zM231 85h1v2h-1zM232 85h1v20h-1zM233 104h1v43h-1zM234 146h1v27h-1zM235 170h1v8h-1zM236 170h1v6h-1zM237 170h1v6h-1zM238 170h1v6h-1zM239 170h1v6h-1zM240 171h1v3h-1zM241 171h1v4h-1zM242 171h1v3h-1zM243 171h1v4h-1zM244 171h1v3h-1zM245 171h1v3h-1zM246 171h1v3h-1zM247 171h1v4h-1zM248 171h1v3h-1zM249 171h1v4h-1zM250 171h1v3h-1zM251 171h1v4h-1zM252 171h1v4h-1zM253 171h1v3h-1zM254 171h1v3h-1zM255 171h1v3h-1zM256 170h1v4h-1zM257 170h1v4h-1zM258 170h1v4h-1zM259 170h1v4h-1zM260 170h1v4h-1zM261 170h1v4h-1zM262 170h1v4h-1zM263 170h1v5h-1zM264 170h1v4h-1zM265 170h1v4h-1zM266 171h1v3h-1zM267 171h1v3h-1zM268 171h1v3h-1zM269 170h1v4h-1zM270 170h1v3h-1zM271 169h1v4h-1zM272 169h1v4h-1zM273 170h1v3h-1zM274 170h1v3h-1zM275 170h1v3h-1zM276 169h1v4h-1zM277 170h1v3h-1zM278 170h1v3h-1zM279 170h1v3h-1zM280 170h1v3h-1zM281 169h1v4h-1zM282 170h1v3h-1zM283 169h1v4h-1zM284 170h1v3h-1zM285 170h1v3h-1zM286 170h1v3h-1zM287 169h1v4h-1zM288 169h1v4h-1zM289 170h1v3h-1zM290 169h1v4h-1zM291 160h1v14h-1zM292 93h1v68h-1zM293 82h1v12h-1zM294 83h1v4h-1zM295 83h1v4h-1zM296 83h1v4h-1zM297 83h1v4h-1zM298 83h1v4h-1zM299 83h1v4h-1zM300 83h1v4h-1zM301 83h1v4h-1zM302 83h1v4h-1zM303 83h1v4h-1zM304 83h1v4h-1zM305 83h1v4h-1zM306 83h1v4h-1zM307 83h1v4h-1zM308 85h1v2h-1zM309 85h1v2h-1zM310 85h1v2h-1zM311 85h1v2h-1zM312 83h1v4h-1zM313 83h1v4h-1zM314 85h1v2h-1zM315 83h1v4h-1zM316 83h1v4h-1zM317 85h1v2h-1zM318 85h1v2h-1zM319 85h1v2h-1zM320 83h1v4h-1zM321 85h1v2h-1zM322 85h1v2h-1zM323 85h1v2h-1zM324 85h1v2h-1zM325 85h1v2h-1zM326 85h1v2h-1zM327 85h1v2h-1zM328 85h1v2h-1zM329 85h1v2h-1zM330 85h1v2h-1zM331 85h1v2h-1zM332 85h1v2h-1zM333 85h1v2h-1zM334 85h1v2h-1zM335 85h1v2h-1zM336 85h1v2h-1zM337 85h1v2h-1zM338 85h1v2h-1zM339 85h1v2h-1zM340 85h1v2h-1zM341 85h1v26h-1zM342 110h1v41h-1zM343 150h1v21h-1zM344 168h1v10h-1zM345 170h1v6h-1zM346 170h1v6h-1zM347 170h1v6h-1zM348 170h1v6h-1zM349 171h1v4h-1zM350 171h1v4h-1zM351 171h1v3h-1zM352 171h1v4h-1zM353 171h1v3h-1zM354 171h1v3h-1zM355 171h1v4h-1zM356 171h1v3h-1zM357 171h1v4h-1zM358 171h1v4h-1zM359 171h1v3h-1zM360 171h1v4h-1zM361 171h1v3h-1zM362 171h1v4h-1zM363 171h1v3h-1zM364 170h1v4h-1zM365 171h1v3h-1zM366 171h1v4h-1zM367 171h1v4h-1zM368 171h1v3h-1zM369 171h1v3h-1zM370 171h1v3h-1zM371 171h1v3h-1zM372 171h1v3h-1zM373 171h1v3h-1zM374 171h1v3h-1zM375 171h1v3h-1zM376 171h1v4h-1zM377 170h1v4h-1zM378 170h1v4h-1zM379 171h1v3h-1zM380 171h1v3h-1zM381 171h1v3h-1zM382 170h1v5h-1zM383 170h1v5h-1zM384 170h1v5h-1zM385 171h1v4h-1zM386 170h1v5h-1zM387 171h1v4h-1zM388 171h1v4h-1zM389 171h1v4h-1zM390 171h1v4h-1zM391 170h1v5h-1zM392 171h1v4h-1zM393 171h1v4h-1zM394 170h1v5h-1zM395 170h1v5h-1zM396 170h1v5h-1zM397 170h1v4h-1zM398 170h1v5h-1zM399 170h1v5h-1zM400 150h1v24h-1zM401 87h1v64h-1zM402 82h1v6h-1zM403 83h1v4h-1zM404 83h1v4h-1zM405 83h1v4h-1zM406 83h1v4h-1zM407 83h1v4h-1zM408 83h1v4h-1zM409 83h1v4h-1zM410 83h1v4h-1zM411 83h1v4h-1zM412 83h1v4h-1zM413 83h1v4h-1zM414 83h1v4h-1zM415 83h1v4h-1zM416 83h1v4h-1zM417 85h1v2h-1zM418 85h1v2h-1zM419 85h1v2h-1zM420 83h1v4h-1zM421 83h1v4h-1zM422 85h1v2h-1zM423 85h1v2h-1zM424 83h1v4h-1zM425 85h1v2h-1zM426 85h1v2h-1zM427 85h1v2h-1zM428 85h1v2h-1zM429 83h1v4h-1zM430 83h1v4h-1zM431 85h1v2h-1zM432 85h1v2h-1zM433 85h1v2h-1zM434 83h1v4h-1zM435 85h1v2h-1zM436 85h1v2h-1zM437 85h1v2h-1zM438 85h1v2h-1zM439 85h1v2h-1zM440 85h1v2h-1zM441 85h1v2h-1zM442 85h1v2h-1zM443 85h1v2h-1zM444 85h1v2h-1zM445 85h1v2h-1zM446 85h1v2h-1zM447 85h1v2h-1zM448 85h1v2h-1zM449 85h1v2h-1zM450 85h1v15h-1zM451 99h1v47h-1zM452 145h1v24h-1zM453 166h1v12h-1zM454 170h1v6h-1zM455 170h1v6h-1zM456 170h1v6h-1zM457 170h1v6h-1zM458 171h1v4h-1zM459 171h1v4h-1zM460 171h1v3h-1zM461 171h1v3h-1zM462 171h1v3h-1zM463 171h1v3h-1zM464 171h1v4h-1zM465 171h1v4h-1zM466 171h1v3h-1zM467 171h1v4h-1zM468 171h1v3h-1zM469 171h1v4h-1zM470 171h1v3h-1zM471 171h1v3h-1zM472 170h1v5h-1zM473 170h1v5h-1zM474 171h1v3h-1zM475 170h1v4h-1zM476 170h1v4h-1zM477 171h1v4h-1zM478 170h1v5h-1zM479 170h1v5h-1zM480 170h1v5h-1zM481 171h1v4h-1zM482 170h1v5h-1zM483 171h1v4h-1zM484 171h1v4h-1zM485 171h1v4h-1zM486 171h1v4h-1zM487 171h1v4h-1zM488 171h1v4h-1zM489 171h1v3h-1zM490 171h1v4h-1zM491 170h1v4h-1zM492 171h1v3h-1zM493 171h1v4h-1zM494 170h1v5h-1zM495 170h1v5h-1zM496 170h1v4h-1zM497 170h1v4h-1zM498 171h1v3h-1zM499 171h1v3h-1zM500 170h1v4h-1zM501 171h1v3h-1zM502 171h1v3h-1zM503 171h1v3h-1zM504 171h1v3h-1zM505 171h1v3h-1zM506 171h1v3h-1zM507 171h1v3h-1zM508 158h1v16h-1zM509 95h1v64h-1zM510 82h1v14h-1zM511 83h1v4h-1zM512 83h1v4h-1zM513 83h1v4h-1zM514 83h1v4h-1zM515 83h1v4h-1zM516 83h1v4h-1zM517 83h1v4h-1zM518 83h1v4h-1zM519 83h1v4h-1zM520 83h1v4h-1zM521 83h1v4h-1zM522 83h1v4h-1zM523 83h1v4h-1zM524 83h1v4h-1zM525 85h1v2h-1zM526 83h1v4h-1zM527 85h1v2h-1zM528 85h1v2h-1zM529 83h1v4h-1zM530 85h1v2h-1zM531 83h1v4h-1zM532 85h1v2h-1zM533 85h1v2h-1zM534 85h1v2h-1zM535 85h1v2h-1zM536 85h1v2h-1zM537 85h1v2h-1zM538 85h1v2h-1zM539 85h1v2h-1zM540 85h1v2h-1zM541 85h1v2h-1zM542 85h1v2h-1zM543 85h1v2h-1zM544 85h1v2h-1zM545 85h1v2h-1zM546 85h1v2h-1zM547 85h1v2h-1zM548 85h1v2h-1zM549 85h1v2h-1zM550 85h1v2h-1zM551 85h1v2h-1zM552 85h1v2h-1zM553 85h1v2h-1zM554 85h1v2h-1zM555 85h1v2h-1zM556 85h1v2h-1zM557 85h1v2h-1zM558 85h1v41h-1zM559 125h1v31h-1zM560 155h1v18h-1zM561 170h1v8h-1zM562 170h1v6h-1zM563 170h1v6h-1zM564 170h1v6h-1zM565 170h1v6h-1zM566 171h1v4h-1zM567 171h1v3h-1zM568 171h1v4h-1zM569 171h1v3h-1zM570 171h1v3h-1zM571 171h1v3h-1zM572 171h1v3h-1zM573 171h1v4h-1zM574 171h1v4h-1zM575 171h1v3h-1zM576 171h1v3h-1zM577 171h1v4h-1zM578 171h1v4h-1zM579 171h1v4h-1zM580 170h1v4h-1zM581 170h1v4h-1zM582 170h1v4h-1zM583 170h1v4h-1zM584 170h1v4h-1zM585 170h1v4h-1zM586 170h1v4h-1zM587 170h1v4h-1zM588 170h1v5h-1zM589 171h1v4h-1zM590 171h1v4h-1zM591 171h1v4h-1zM592 171h1v3h-1zM593 170h1v4h-1zM594 170h1v4h-1zM595 170h1v3h-1zM596 170h1v3h-1zM597 170h1v3h-1zM598 170h1v3h-1zM599 170h1v3h-1zM600 169h1v4h-1zM601 169h1v4h-1zM602 170h1v3h-1zM603 169h1v4h-1zM604 170h1v3h-1zM605 169h1v4h-1zM606 169h1v4h-1zM607 169h1v4h-1zM608 169h1v4h-1zM609 169h1v4h-1zM610 170h1v3h-1zM611 170h1v3h-1zM612 170h1v3h-1zM613 170h1v3h-1zM614 169h1v4h-1zM615 169h1v4h-1zM616 150h1v24h-1zM617 100h1v51h-1zM618 82h1v19h-1zM619 83h1v4h-1zM620 83h1v4h-1zM621 83h1v4h-1zM622 83h1v4h-1zM623 83h1v4h-1zM624 83h1v4h-1zM625 83h1v4h-1zM626 83h1v4h-1zM627 83h1v4h-1zM628 83h1v4h-1zM629 83h1v4h-1zM630 83h1v4h-1zM631 83h1v4h-1zM632 83h1v4h-1zM633 85h1v2h-1zM634 85h1v2h-1zM635 85h1v2h-1zM636 85h1v2h-1zM637 85h1v2h-1zM638 85h1v2h-1zM639 85h1v2h-1zM640 85h1v2h-1zM641 85h1v2h-1zM642 85h1v2h-1zM643 85h1v2h-1zM644 85h1v2h-1zM645 85h1v2h-1zM646 85h1v2h-1zM647 83h1v4h-1zM648 85h1v2h-1zM649 85h1v2h-1zM650 85h1v2h-1zM651 85h1v2h-1zM652 85h1v2h-1zM653 85h1v2h-1zM654 85h1v2h-1zM655 85h1v2h-1zM656 85h1v2h-1zM657 85h1v2h-1zM658 85h1v2h-1zM659 85h1v2h-1zM660 85h1v2h-1zM661 85h1v2h-1zM662 85h1v2h-1zM663 85h1v2h-1zM664 85h1v2h-1zM665 85h1v2h-1zM666 85h1v21h-1zM667 105h1v46h-1zM668 150h1v21h-1zM669 168h1v10h-1zM670 170h1v6h-1zM671 170h1v6h-1zM672 170h1v6h-1zM673 170h1v6h-1zM674 171h1v4h-1zM675 171h1v3h-1zM676 171h1v3h-1zM677 171h1v3h-1zM678 171h1v3h-1zM679 171h1v4h-1zM680 171h1v4h-1zM681 171h1v3h-1zM682 171h1v3h-1zM683 171h1v4h-1zM684 171h1v3h-1zM685 171h1v3h-1zM686 171h1v3h-1zM687 171h1v4h-1zM688 170h1v4h-1zM689 170h1v5h-1zM690 171h1v4h-1zM691 171h1v3h-1zM692 171h1v3h-1zM693 171h1v3h-1zM694 171h1v3h-1zM695 171h1v3h-1zM696 170h1v5h-1zM697 171h1v4h-1zM698 171h1v4h-1zM699 171h1v3h-1zM700 171h1v3h-1zM701 170h1v4h-1zM702 170h1v4h-1zM703 170h1v4h-1zM704 170h1v3h-1zM705 169h1v4h-1zM706 170h1v3h-1zM707 170h1v3h-1zM708 169h1v4h-1zM709 169h1v4h-1zM710 169h1v4h-1zM711 169h1v4h-1zM712 170h1v3h-1zM713 170h1v3h-1zM714 169h1v4h-1zM715 169h1v4h-1zM716 169h1v4h-1zM717 170h1v3h-1zM718 170h1v3h-1zM719 169h1v4h-1zM720 169h1v4h-1zM721 169h1v4h-1zM722 170h1v3h-1zM723 169h1v4h-1zM724 169h1v4h-1zM725 145h1v29h-1zM726 100h1v46h-1zM727 82h1v19h-1zM728 83h1v4h-1zM729 83h1v4h-1zM730 83h1v4h-1zM731 83h1v4h-1zM732 83h1v4h-1zM733 83h1v4h-1zM734 83h1v4h-1zM735 83h1v4h-1zM736 83h1v4h-1zM737 83h1v4h-1zM738 83h1v4h-1zM739 83h1v4h-1zM740 83h1v4h-1zM741 83h1v4h-1zM742 85h1v2h-1zM743 85h1v2h-1zM744 85h1v2h-1zM745 83h1v4h-1zM746 85h1v2h-1zM747 83h1v4h-1zM748 85h1v2h-1zM749 85h1v2h-1zM750 85h1v2h-1zM751 85h1v2h-1zM752 85h1v2h-1zM753 83h1v4h-1zM754 85h1v2h-1zM755 85h1v2h-1zM756 83h1v4h-1zM757 85h1v2h-1zM758 85h1v2h-1zM759 83h1v4h-1zM760 85h1v2h-1zM761 85h1v2h-1zM762 85h1v2h-1zM763 85h1v2h-1zM764 85h1v2h-1zM765 85h1v2h-1zM766 85h1v2h-1zM767 85h1v2h-1zM768 85h1v2h-1zM769 85h1v2h-1zM770 85h1v2h-1zM771 85h1v2h-1zM772 85h1v2h-1zM773 85h1v2h-1zM774 85h1v2h-1zM775 85h1v32h-1zM776 116h1v38h-1zM777 153h1v26h-1z"/>
<path fill="#F0F000" d="M22 370h1v3h-1zM23 370h1v3h-1zM24 370h1v3h-1zM25 370h1v3h-1zM26 369h1v4h-1zM27 370h1v3h-1zM28 370h1v3h-1zM29 370h1v3h-1zM30 370h1v3h-1zM31 370h1v3h-1zM32 369h1v4h-1zM33 370h1v3h-1zM34 370h1v3h-1zM35 370h1v3h-1zM36 370h1v3h-1zM37 370h1v3h-1zM38 370h1v3h-1zM39 370h1v3h-1zM40 370h1v3h-1zM41 370h1v3h-1zM42 370h1v3h-1zM43 370h1v3h-1zM44 370h1v3h-1zM45 370h1v3h-1zM46 370h1v3h-1zM47 370h1v3h-1zM48 370h1v3h-1zM49 370h1v3h-1zM50 370h1v3h-1zM51 370h1v3h-1zM52 370h1v3h-1zM53 370h1v3h-1zM54 370h1v3h-1zM55 370h1v3h-1zM56 370h1v3h-1zM57 370h1v3h-1zM58 370h1v3h-1zM59 369h1v4h-1zM60 370h1v3h-1zM61 370h1v3h-1zM62 369h1v4h-1zM63 370h1v3h-1zM64 370h1v3h-1zM65 370h1v3h-1zM66 370h1v3h-1zM67 370h1v3h-1zM68 370h1v3h-1zM69 370h1v3h-1zM70 370h1v3h-1zM71 369h1v4h-1zM72 370h1v3h-1zM73 370h1v3h-1zM74 365h1v8h-1zM75 305h1v61h-1zM76 296h1v10h-1zM77 297h1v5h-1zM78 297h1v5h-1zM79 295h1v5h-1zM80 297h1v3h-1zM81 297h1v5h-1zM82 297h1v5h-1zM83 297h1v5h-1zM84 295h1v5h-1zM85 297h1v3h-1zM86 297h1v3h-1zM87 297h1v3h-1zM88 297h1v3h-1zM89 295h1v3h-1zM90 295h1v3h-1zM91 295h1v3h-1zM92 295h1v3h-1zM93 293h1v3h-1zM94 293h1v3h-1zM95 293h1v3h-1zM96 293h1v3h-1zM97 293h1v3h-1zM98 291h1v3h-1zM99 291h1v3h-1zM100 291h1v3h-1zM101 291h1v3h-1zM102 291h1v3h-1zM103 289h1v3h-1zM104 289h1v3h-1zM105 289h1v3h-1zM106 289h1v3h-1zM107 287h1v3h-1zM108 287h1v3h-1zM109 287h1v3h-1zM110 287h1v3h-1zM111 287h1v3h-1zM112 285h1v3h-1zM113 285h1v3h-1zM114 285h1v3h-1zM115 285h1v3h-1zM116 285h1v3h-1zM117 283h1v3h-1zM118 283h1v3h-1zM119 283h1v3h-1zM120 283h1v3h-1zM121 281h1v3h-1zM122 281h1v3h-1zM123 281h1v3h-1zM124 281h1v59h-1zM125 339h1v22h-1zM126 360h1v12h-1zM127 369h1v8h-1zM128 370h1v5h-1zM129 370h1v5h-1zM130 370h1v5h-1zM131 370h1v5h-1zM132 370h1v5h-1zM133 370h1v5h-1zM134 370h1v4h-1zM135 370h1v4h-1zM136 370h1v3h-1zM137 370h1v3h-1zM138 370h1v3h-1zM139 370h1v3h-1zM140 370h1v3h-1zM141 370h1v4h-1zM142 370h1v3h-1zM143 370h1v4h-1zM144 370h1v3h-1zM145 370h1v3h-1zM146 370h1v3h-1zM147 370h1v3h-1zM148 370h1v3h-1zM149 370h1v3h-1zM150 370h1v3h-1zM151 370h1v3h-1zM152 369h1v4h-1zM153 370h1v3h-1zM154 370h1v3h-1zM155 370h1v3h-1zM156 370h1v3h-1zM157 370h1v3h-1zM158 370h1v3h-1zM159 370h1v3h-1zM160 370h1v3h-1zM161 370h1v3h-1zM162 370h1v3h-1zM163 370h1v3h-1zM164 370h1v3h-1zM165 369h1v4h-1zM166 370h1v3h-1zM167 370h1v3h-1zM168 370h1v3h-1zM169 370h1v3h-1zM170 370h1v3h-1zM171 370h1v3h-1zM172 370h1v3h-1zM173 370h1v3h-1zM174 370h1v3h-1zM175 370h1v3h-1zM176 369h1v4h-1zM177 370h1v3h-1zM178 370h1v3h-1zM179 370h1v3h-1zM180 370h1v3h-1zM181 370h1v3h-1zM182 354h1v19h-1zM183 317h1v38h-1zM184 296h1v22h-1zM185 297h1v5h-1zM186 297h1v5h-1zM187 295h1v5h-1zM188 297h1v3h-1zM189 297h1v5h-1zM190 297h1v5h-1zM191 297h1v5h-1zM192 295h1v5h-1zM193 297h1v3h-1zM194 297h1v3h-1zM195 297h1v3h-1zM196 297h1v3h-1zM197 295h1v3h-1zM198 295h1v3h-1zM199 295h1v3h-1zM200 295h1v3h-1zM201 293h1v3h-1zM202 293h1v3h-1zM203 293h1v3h-1zM204 293h1v3h-1zM205 293h1v3h-1zM206 291h1v3h-1zM207 291h1v3h-1zM208 291h1v3h-1zM209 291h1v3h-1zM210 291h1v3h-1zM211 289h1v3h-1zM212 289h1v3h-1zM213 289h1v3h-1zM214 289h1v3h-1zM215 287h1v3h-1zM216 287h1v3h-1zM217 287h1v3h-1zM218 287h1v3h-1zM219 287h1v3h-1zM220 285h1v3h-1zM221 285h1v3h-1zM222 285h1v3h-1zM223 285h1v3h-1zM224 285h1v3h-1zM225 283h1v3h-1zM226 283h1v3h-1zM227 283h1v3h-1zM228 283h1v3h-1zM229 281h1v3h-1zM230 281h1v3h-1zM231 281h1v3h-1zM232 281h1v34h-1zM233 314h1v37h-1zM234 350h1v22h-1zM235 369h1v8h-1zM236 370h1v5h-1zM237 370h1v5h-1zM238 370h1v5h-1zM239 370h1v5h-1zM240 370h1v5h-1zM241 370h1v5h-1zM242 370h1v3h-1zM243 370h1v4h-1zM244 370h1v3h-1zM245 370h1v4h-1zM246 370h1v3h-1zM247 370h1v3h-1zM248 370h1v3h-1zM249 370h1v4h-1zM250 370h1v3h-1zM251 370h1v3h-1zM252 370h1v3h-1zM253 369h1v4h-1zM254 369h1v4h-1zM255 370h1v3h-1zM256 370h1v3h-1zM257 370h1v3h-1zM258 370h1v3h-1zM259 370h1v3h-1zM260 370h1v3h-1zM261 370h1v3h-1zM262 370h1v3h-1zM263 370h1v3h-1zM264 370h1v3h-1zM265 370h1v3h-1zM266 369h1v4h-1zM267 370h1v3h-1zM268 370h1v3h-1zM269 370h1v3h-1zM270 370h1v3h-1zM271 370h1v3h-1zM272 370h1v3h-1zM273 370h1v3h-1zM274 370h1v3h-1zM275 370h1v3h-1zM276 370h1v3h-1zM277 370h1v3h-1zM278 369h1v4h-1zM279 370h1v3h-1zM280 370h1v3h-1zM281 370h1v3h-1zM282 370h1v3h-1zM283 370h1v3h-1zM284 370h1v3h-1zM285 369h1v4h-1zM286 370h1v3h-1zM287 370h1v3h-1zM288 370h1v3h-1zM289 370h1v3h-1zM290 370h1v3h-1zM291 361h1v12h-1zM292 305h1v57h-1zM293 296h1v10h-1zM294 297h1v5h-1zM295 297h1v5h-1zM296 295h1v5h-1zM297 297h1v3h-1zM298 297h1v5h-1zM299 297h1v5h-1zM300 297h1v5h-1zM301 295h1v5h-1zM302 297h1v3h-1zM303 297h1v3h-1zM304 297h1v3h-1zM305 297h1v3h-1zM306 295h1v3h-1zM307 295h1v3h-1zM308 295h1v3h-1zM309 295h1v3h-1zM310 293h1v3h-1zM311 293h1v3h-1zM312 293h1v3h-1zM313 293h1v3h-1zM314 293h1v3h-1zM315 291h1v3h-1zM316 291h1v3h-1zM317 291h1v3h-1zM318 291h1v3h-1zM319 291h1v3h-1zM320 289h1v3h-1zM321 289h1v3h-1zM322 289h1v3h-1zM323 289h1v3h-1zM324 287h1v3h-1zM325 287h1v3h-1zM326 287h1v3h-1zM327 287h1v3h-1zM328 287h1v3h-1zM329 285h1v3h-1zM330 285h1v3h-1zM331 285h1v3h-1zM332 285h1v3h-1zM333 285h1v3h-1zM334 283h1v3h-1zM335 283h1v3h-1zM336 283h1v3h-1zM337 283h1v3h-1zM338 281h1v3h-1zM339 281h1v3h-1zM340 281h1v3h-1zM341 281h1v40h-1zM342 320h1v34h-1zM343 353h1v18h-1zM344 368h1v9h-1zM345 370h1v5h-1zM346 370h1v5h-1zM347 370h1v5h-1zM348 370h1v5h-1zM349 370h1v5h-1zM350 370h1v5h-1zM351 370h1v3h-1zM352 370h1v3h-1zM353 370h1v4h-1zM354 370h1v3h-1zM355 370h1v3h-1zM356 370h1v3h-1zM357 370h1v4h-1zM358 370h1v3h-1zM359 370h1v4h-1zM360 370h1v3h-1zM361 370h1v3h-1zM362 370h1v3h-1zM363 370h1v3h-1zM364 370h1v3h-1zM365 370h1v3h-1zM366 369h1v4h-1zM367 370h1v3h-1zM368 370h1v3h-1zM369 370h1v3h-1zM370 370h1v3h-1zM371 370h1v3h-1zM372 370h1v3h-1zM373 370h1v3h-1zM374 370h1v3h-1zM375 369h1v4h-1zM376 370h1v3h-1zM377 370h1v3h-1zM378 370h1v3h-1zM379 370h1v3h-1zM380 369h1v4h-1zM381 370h1v3h-1zM382 370h1v3h-1zM383 370h1v3h-1zM384 369h1v4h-1zM385 370h1v3h-1zM386 370h1v3h-1zM387 370h1v3h-1zM388 369h1v4h-1zM389 370h1v3h-1zM390 370h1v3h-1zM391 370h1v3h-1zM392 369h1v4h-1zM393 370h1v3h-1zM394 370h1v3h-1zM395 370h1v3h-1zM396 370h1v3h-1zM397 370h1v3h-1zM398 370h1v3h-1zM399 370h1v3h-1zM400 353h1v20h-1zM401 300h1v54h-1zM402 296h1v5h-1zM403 297h1v5h-1zM404 297h1v5h-1zM405 295h1v5h-1zM406 297h1v3h-1zM407 297h1v5h-1zM408 297h1v5h-1zM409 297h1v5h-1zM410 295h1v5h-1zM411 297h1v3h-1zM412 297h1v3h-1zM413 297h1v3h-1zM414 297h1v3h-1zM415 295h1v3h-1zM416 295h1v3h-1zM417 295h1v3h-1zM418 295h1v3h-1zM419 293h1v3h-1zM420 293h1v3h-1zM421 293h1v3h-1zM422 293h1v3h-1zM423 293h1v3h-1zM424 291h1v3h-1zM425 291h1v3h-1zM426 291h1v3h-1zM427 291h1v3h-1zM428 291h1v3h-1zM429 289h1v3h-1zM430 289h1v3h-1zM431 289h1v3h-1zM432 289h1v3h-1zM433 287h1v3h-1zM434 287h1v3h-1zM435 287h1v3h-1zM436 287h1v3h-1zM437 287h1v3h-1zM438 285h1v3h-1zM439 285h1v3h-1zM440 285h1v3h-1zM441 285h1v3h-1zM442 285h1v3h-1zM443 283h1v3h-1zM444 283h1v3h-1zM445 283h1v3h-1zM446 283h1v3h-1zM447 281h1v3h-1zM448 281h1v3h-1zM449 281h1v3h-1zM450 281h1v30h-1zM451 310h1v40h-1zM452 349h1v20h-1zM453 366h1v11h-1zM454 370h1v5h-1zM455 370h1v5h-1zM456 370h1v5h-1zM457 370h1v5h-1zM458 370h1v5h-1zM459 370h1v5h-1zM460 370h1v4h-1zM461 370h1v3h-1zM462 370h1v4h-1zM463 370h1v4h-1zM464 370h1v4h-1zM465 370h1v3h-1zM466 370h1v4h-1zM467 370h1v3h-1zM468 370h1v3h-1zM469 370h1v3h-1zM470 370h1v3h-1zM471 370h1v3h-1zM472 370h1v3h-1zM473 370h1v3h-1zM474 370h1v3h-1zM475 369h1v4h-1zM476 370h1v3h-1zM477 370h1v3h-1zM478 369h1v4h-1zM479 370h1v3h-1zM480 370h1v3h-1zM481 370h1v3h-1zM482 370h1v3h-1zM483 369h1v4h-1zM484 370h1v3h-1zM485 370h1v3h-1zM486 370h1v3h-1zM487 370h1v3h-1zM488 370h1v3h-1zM489 370h1v3h-1zM490 370h1v3h-1zM491 370h1v3h-1zM492 370h1v3h-1zM493 370h1v3h-1zM494 370h1v3h-1zM495 370h1v3h-1zM496 370h1v3h-1zM497 370h1v3h-1zM498 370h1v3h-1zM499 370h1v3h-1zM500 370h1v3h-1zM501 370h1v3h-1zM502 370h1v3h-1zM503 370h1v3h-1zM504 370h1v3h-1zM505 370h1v3h-1zM506 370h1v3h-1zM507 370h1v3h-1zM508 360h1v13h-1zM509 307h1v54h-1zM510 296h1v12h-1zM511 297h1v5h-1zM512 297h1v5h-1zM513 295h1v5h-1zM514 297h1v3h-1zM515 297h1v5h-1zM516 297h1v5h-1zM517 297h1v5h-1zM518 295h1v5h-1zM519 297h1v3h-1zM520 297h1v3h-1zM521 297h1v3h-1zM522 297h1v3h-1zM523 295h1v3h-1zM524 295h1v3h-1zM525 295h1v3h-1zM526 295h1v3h-1zM527 293h1v3h-1zM528 293h1v3h-1zM529 293h1v3h-1zM530 293h1v3h-1zM531 293h1v3h-1zM532 291h1v3h-1zM533 291h1v3h-1zM534 291h1v3h-1zM535 291h1v3h-1zM536 291h1v3h-1zM537 289h1v3h-1zM538 289h1v3h-1zM539 289h1v3h-1zM540 289h1v3h-1zM541 287h1v3h-1zM542 287h1v3h-1zM543 287h1v3h-1zM544 287h1v3h-1zM545 287h1v3h-1zM546 285h1v3h-1zM547 285h1v3h-1zM548 285h1v3h-1zM549 285h1v3h-1zM550 285h1v3h-1zM551 283h1v3h-1zM552 283h1v3h-1zM553 283h1v3h-1zM554 283h1v3h-1zM555 281h1v3h-1zM556 281h1v3h-1zM557 281h1v3h-1zM558 281h1v52h-1zM559 332h1v26h-1zM560 357h1v15h-1zM561 369h1v8h-1zM562 370h1v5h-1zM563 370h1v5h-1zM564 370h1v5h-1zM565 370h1v5h-1zM566 370h1v5h-1zM567 370h1v5h-1zM568 370h1v4h-1zM569 370h1v3h-1zM570 370h1v4h-1zM571 370h1v3h-1zM572 370h1v3h-1zM573 370h1v4h-1zM574 370h1v3h-1zM575 370h1v3h-1zM576 370h1v3h-1zM577 370h1v3h-1zM578 370h1v3h-1zM579 370h1v3h-1zM580 369h1v4h-1zM581 370h1v3h-1zM582 370h1v3h-1zM583 370h1v3h-1zM584 370h1v3h-1zM585 370h1v3h-1zM586 370h1v3h-1zM587 370h1v3h-1zM588 370h1v3h-1zM589 370h1v3h-1zM590 370h1v3h-1zM591 369h1v4h-1zM592 369h1v4h-1zM593 370h1v3h-1zM594 369h1v4h-1zM595 370h1v3h-1zM596 370h1v3h-1zM597 370h1v3h-1zM598 370h1v3h-1zM599 370h1v3h-1zM600 370h1v3h-1zM601 370h1v3h-1zM602 370h1v3h-1zM603 370h1v3h-1zM604 370h1v3h-1zM605 370h1v3h-1zM606 370h1v3h-1zM607 370h1v3h-1zM608 370h1v3h-1zM609 370h1v3h-1zM610 370h1v3h-1zM611 370h1v3h-1zM612 370h1v3h-1zM613 370h1v3h-1zM614 369h1v4h-1zM615 370h1v3h-1zM616 353h1v20h-1zM617 311h1v43h-1zM618 296h1v16h-1zM619 297h1v5h-1zM620 297h1v5h-1zM621 295h1v5h-1zM622 297h1v3h-1zM623 297h1v5h-1zM624 297h1v5h-1zM625 297h1v5h-1zM626 295h1v5h-1zM627 297h1v3h-1zM628 297h1v3h-1zM629 297h1v3h-1zM630 297h1v3h-1zM631 295h1v3h-1zM632 295h1v3h-1zM633 295h1v3h-1zM634 295h1v3h-1zM635 293h1v3h-1zM636 293h1v3h-1zM637 293h1v3h-1zM638 293h1v3h-1zM639 293h1v3h-1zM640 291h1v3h-1zM641 291h1v3h-1zM642 291h1v3h-1zM643 291h1v3h-1zM644 291h1v3h-1zM645 289h1v3h-1zM646 289h1v3h-1zM647 289h1v3h-1zM648 289h1v3h-1zM649 287h1v3h-1zM650 287h1v3h-1zM651 287h1v3h-1zM652 287h1v3h-1zM653 287h1v3h-1zM654 285h1v3h-1zM655 285h1v3h-1zM656 285h1v3h-1zM657 285h1v3h-1zM658 285h1v3h-1zM659 283h1v3h-1zM660 283h1v3h-1zM661 283h1v3h-1zM662 283h1v3h-1zM663 281h1v3h-1zM664 281h1v3h-1zM665 281h1v3h-1zM666 281h1v35h-1zM667 315h1v39h-1zM668 353h1v18h-1zM669 368h1v9h-1zM670 370h1v5h-1zM671 370h1v5h-1zM672 370h1v5h-1zM673 370h1v5h-1zM674 370h1v5h-1zM675 370h1v5h-1zM676 370h1v4h-1zM677 370h1v3h-1zM678 370h1v3h-1zM679 370h1v3h-1zM680 370h1v4h-1zM681 370h1v3h-1zM682 370h1v4h-1zM683 370h1v4h-1zM684 370h1v3h-1zM685 370h1v3h-1zM686 370h1v3h-1zM687 369h1v4h-1zM688 370h1v3h-1zM689 370h1v3h-1zM690 370h1v3h-1zM691 370h1v3h-1zM692 370h1v3h-1zM693 370h1v3h-1zM694 370h1v3h-1zM695 370h1v3h-1zM696 370h1v3h-1zM697 370h1v3h-1zM698 370h1v3h-1zM699 370h1v3h-1zM700 370h1v3h-1zM701 370h1v3h-1zM702 370h1v3h-1zM703 370h1v3h-1zM704 370h1v3h-1zM705 369h1v4h-1zM706 370h1v3h-1zM707 370h1v3h-1zM708 370h1v3h-1zM709 370h1v3h-1zM710 370h1v3h-1zM711 370h1v3h-1zM712 370h1v3h-1zM713 370h1v3h-1zM714 370h1v3h-1zM715 370h1v3h-1zM716 370h1v3h-1zM717 370h1v3h-1zM718 370h1v3h-1zM719 370h1v3h-1zM720 370h1v3h-1zM721 370h1v3h-1zM722 370h1v3h-1zM723 370h1v3h-1zM724 370h1v3h-1zM725 349h1v24h-1zM726 311h1v39h-1zM727 296h1v16h-1zM728 297h1v5h-1zM729 297h1v5h-1zM730 295h1v5h-1zM731 297h1v3h-1zM732 297h1v5h-1zM733 297h1v5h-1zM734 297h1v5h-1zM735 295h1v5h-1zM736 297h1v3h-1zM737 297h1v3h-1zM738 297h1v3h-1zM739 297h1v3h-1zM740 295h1v3h-1zM741 295h1v3h-1zM742 295h1v3h-1zM743 295h1v3h-1zM744 293h1v3h-1zM745 293h1v3h-1zM746 293h1v3h-1zM747 293h1v3h-1zM748 293h1v3h-1zM749 291h1v3h-1zM750 291h1v3h-1zM751 291h1v3h-1zM752 291h1v3h-1zM753 291h1v3h-1zM754 289h1v3h-1zM755 289h1v3h-1zM756 289h1v3h-1zM757 289h1v3h-1zM758 287h1v3h-1zM759 287h1v3h-1zM760 287h1v3h-1zM761 287h1v3h-1zM762 287h1v3h-1zM763 285h1v3h-1zM764 285h1v3h-1zM765 285h1v3h-1zM766 285h1v3h-1zM767 285h1v3h-1zM768 283h1v3h-1zM769 283h1v3h-1zM770 283h1v3h-1zM771 283h1v3h-1zM772 281h1v3h-1zM773 281h1v3h-1zM774 281h1v3h-1zM775 281h1v44h-1zM776 324h1v32h-1zM777 355h1v22h-1z"/>
</svg>

<!-- logo -->
<svg style="left:0;top:0" width="90" height="20" viewBox="0 0 90 20">
<circle cx="16.5" cy="9.75" r="6.3" fill="none" stroke="#E0A000" stroke-width="2.9"/>
<path d="M27.5 2.1 V12.2 a3.55 3.55 0 0 0 3.55 3.55 H40.45 a3.55 3.55 0 0 0 3.55 -3.55 V2.1 M36.3 2.1 V15.75" fill="none" stroke="#000" stroke-width="3"/>
<circle cx="55" cy="9.45" r="6.35" fill="none" stroke="#000" stroke-width="3"/>
<path d="M66 17.5 V8.2 a5.075 5.075 0 0 1 10.15 0 V17.5" fill="none" stroke="#000" stroke-width="3"/>
</svg>

<!-- Trig -->
<div style="left:120px;top:1px;width:81px;height:18px;border-radius:9px;background:#00DC00"></div>
<span class="t" style="left:139.5px;top:3px;color:#000;-webkit-text-stroke:0.2px #00DC00">Trig</span>

<!-- pill 1 with yellow line -->
<div class="pill" style="left:250px;top:1px;width:300px"></div>
<div style="left:260px;top:9px;width:281px;height:1px;background:#E0E000"></div>
<div style="left:398px;top:2px;width:5px;height:2px;background:#F000F0"></div>
<div style="left:400px;top:4px;width:1px;height:3px;background:#F000F0"></div>
<div style="left:400px;top:7px;width:1px;height:11px;background:#B0B0B0"></div>

<!-- T shield in plot -->
<svg style="left:393px;top:19px" width="16" height="18" viewBox="0 0 16 18">
<path d="M1.5 1.5 H14.5 V11.5 L8 15.7 L1.5 11.5 Z" fill="#000" stroke="#8A1FD0" stroke-width="1.6"/>
<path d="M4.5 5 H11.5 M8 5 V12" stroke="#C020F0" stroke-width="1.6" fill="none"/>
</svg>

<!-- pill 2 -->
<div class="pill" style="left:560px;top:1px;width:108px"></div>
<svg style="left:562px;top:2px" width="16" height="18" viewBox="0 0 16 18">
<path d="M1.5 1.5 H14.5 V11.5 L8 15.7 L1.5 11.5 Z" fill="#000" stroke="#8A1FD0" stroke-width="1.6"/>
<path d="M4.5 5 H11.5 M8 5 V12" stroke="#C020F0" stroke-width="1.6" fill="none"/>
</svg>
<span class="t wht" style="left:578.8px;top:4px"><i class="z">0</i>.<i class="z">0</i><i class="z">0</i><i class="z">0</i>ns</span>

<!-- usb icon -->
<svg style="left:752px;top:0" width="20" height="20" viewBox="0 0 20 20">
<path d="M5.5 12 L13 8.3 L16 11.3 V13 L8.5 17 L5.5 14 Z" fill="#C4C4DC" stroke="#4A5080" stroke-width="0.7"/>
<path d="M5.5 14 L8.5 17 L16 13 V11.6 L8.5 15.4 L5.5 12.4 Z" fill="#8C8CB0"/>
<path d="M8.2 11.8 L10 11 M10.8 10.8 L12.6 10" stroke="#38385C" stroke-width="1.5"/>
<path d="M4.2 2.8 L6.8 5.6 Q9 3 11.7 3.6 Q12 6.6 9 8 L8.8 10.6 L4 8.6 Z" fill="#2CB40C"/>
<path d="M5 4.5 L6.8 6.6 Q8.6 4.4 10.8 4.6" stroke="#7CE040" stroke-width="0.9" fill="none"/>
</svg>

<!-- channel markers -->
<svg style="left:0;top:160px" width="21" height="20" viewBox="0 0 21 20">
<path d="M0.5 1.5 H14.5 L19.3 10 L14.5 18.5 H0.5 Z" fill="#000" stroke="#F00000" stroke-width="1"/>
<path d="M5.2 9.3 L9.4 5.4 V16" fill="none" stroke="#F00000" stroke-width="1.7"/>
</svg>
<svg style="left:0;top:360px" width="21" height="20" viewBox="0 0 21 20">
<path d="M0.5 1.5 H14.5 L19.3 10 L14.5 18.5 H0.5 Z" fill="#000" stroke="#F0F000" stroke-width="1"/>
<path d="M4.6 8.2 C4.6 3.9 11.2 3.9 11.2 7.9 C11.2 10.8 5 11.6 4.3 14.7 H12" fill="none" stroke="#F0F000" stroke-width="1.5"/>
</svg>

<!-- trigger level marker -->
<svg style="left:780px;top:110px" width="16" height="16" viewBox="0 0 16 16">
<path d="M0 7.7 L14 1.8 V13.8 Z" fill="#A020E0"/>
</svg>

<!-- info box -->
<div style="left:25px;top:477px;width:319px;height:40px;background:#0080E0"></div>
<div style="left:25px;top:477px;width:210px;height:1px;background:#4A8080"></div><div style="left:236px;top:477px;width:108px;height:1px;background:#1A4A78"></div>
<div class="teal" style="left:25px;top:477px;width:1.8px;height:40px;"></div>
<div class="teal" style="left:234px;top:477px;width:1.8px;height:40px;"></div>
<div class="teal" style="left:342px;top:477px;width:1.8px;height:40px;"></div>
<div class="blk" style="left:26.5px;top:478px;width:207.5px;height:19px;border-radius:4px"></div>
<div class="blk" style="left:26.5px;top:498px;width:207.5px;height:19px;border-radius:4px"></div>
<div style="left:30px;top:497px;width:201px;height:1px;background:#0A5A96"></div>
<div class="blk" style="left:236px;top:478px;width:106px;height:39px;border-radius:6px"></div>
<svg style="left:27.5px;top:480px" width="16" height="16" viewBox="0 0 16 16"><circle cx="7.9" cy="7.9" r="7.9" fill="#F00000"/><path d="M5.2 6.5 L8.4 3.3 V13.1" fill="none" stroke="#000" stroke-width="1.45"/></svg>
<svg style="left:27.5px;top:500px" width="16" height="16" viewBox="0 0 16 16"><circle cx="7.9" cy="7.9" r="7.9" fill="#E6E600"/><path d="M5.3 6.4 C5.3 3.1 10.6 3.1 10.6 6.1 C10.6 8.8 5.5 9.6 4.9 12.4 H11.1" fill="none" stroke="#000" stroke-width="1.45"/></svg>
<span class="t red" style="left:43.2px;top:482px">2VBW-</span><span class="t red" style="left:131px;top:482px">2.<i class="z">0</i><i class="z">0</i>div</span>
<span class="t yel" style="left:43.2px;top:501px">2VBW-</span><span class="t yel" style="left:131px;top:501px">-2.<i class="z">0</i><i class="z">0</i>div</span>
<span class="t wht" style="left:243.5px;top:480px">(5<i class="z">0</i><i class="z">0</i>MS/s)</span>
<span class="t wht" style="left:243.5px;top:500px">Depth:1<i class="z">0</i>M</span>

<!-- measurement panel -->
<div class="teal" style="left:0;top:519px;width:319px;height:79px"></div>
<div style="left:1px;top:521px;width:316px;height:75px;background:#0080E0"></div>
<div class="blk" style="left:1px;top:521px;width:316px;height:75px;border-radius:5px"></div>

<svg style="left:2px;top:521px" width="16" height="16" viewBox="0 0 16 16"><circle cx="7.9" cy="7.9" r="7.9" fill="#F00000"/><path d="M5.2 6.5 L8.4 3.3 V13.1" fill="none" stroke="#000" stroke-width="1.45"/></svg>
<svg style="left:2px;top:540px" width="16" height="16" viewBox="0 0 16 16"><circle cx="7.9" cy="7.9" r="7.9" fill="#F00000"/><path d="M5.2 6.5 L8.4 3.3 V13.1" fill="none" stroke="#000" stroke-width="1.45"/></svg>
<svg style="left:2px;top:560px" width="16" height="16" viewBox="0 0 16 16"><circle cx="7.9" cy="7.9" r="7.9" fill="#F00000"/><path d="M5.2 6.5 L8.4 3.3 V13.1" fill="none" stroke="#000" stroke-width="1.45"/></svg>
<svg style="left:2px;top:579px" width="16" height="16" viewBox="0 0 16 16"><circle cx="7.9" cy="7.9" r="7.9" fill="#F00000"/><path d="M5.2 6.5 L8.4 3.3 V13.1" fill="none" stroke="#000" stroke-width="1.45"/></svg>
<span class="t red" style="left:21.5px;top:522px">F:921.7KHz</span>
<span class="t red" style="left:21.5px;top:541px">Vp:3.76<i class="z">0</i>v</span>
<span class="t red" style="left:21.5px;top:561px">Vk:2.275v</span>
<span class="t red" style="left:21.5px;top:581px">V:1.514v</span>

<svg style="left:160px;top:521px" width="16" height="16" viewBox="0 0 16 16"><circle cx="7.9" cy="7.9" r="7.9" fill="#E6E600"/><path d="M5.3 6.4 C5.3 3.1 10.6 3.1 10.6 6.1 C10.6 8.8 5.5 9.6 4.9 12.4 H11.1" fill="none" stroke="#000" stroke-width="1.45"/></svg>
<svg style="left:160px;top:540px" width="16" height="16" viewBox="0 0 16 16"><circle cx="7.9" cy="7.9" r="7.9" fill="#E6E600"/><path d="M5.3 6.4 C5.3 3.1 10.6 3.1 10.6 6.1 C10.6 8.8 5.5 9.6 4.9 12.4 H11.1" fill="none" stroke="#000" stroke-width="1.45"/></svg>
<svg style="left:160px;top:560px" width="16" height="16" viewBox="0 0 16 16"><circle cx="7.9" cy="7.9" r="7.9" fill="#E6E600"/><path d="M5.3 6.4 C5.3 3.1 10.6 3.1 10.6 6.1 C10.6 8.8 5.5 9.6 4.9 12.4 H11.1" fill="none" stroke="#000" stroke-width="1.45"/></svg>
<svg style="left:160px;top:579px" width="16" height="16" viewBox="0 0 16 16"><circle cx="7.9" cy="7.9" r="7.9" fill="#E6E600"/><path d="M5.3 6.4 C5.3 3.1 10.6 3.1 10.6 6.1 C10.6 8.8 5.5 9.6 4.9 12.4 H11.1" fill="none" stroke="#000" stroke-width="1.45"/></svg>
<span class="t yel" style="left:181.5px;top:522px">F:92<i class="z">0</i>.2KHz</span>
<span class="t yel" style="left:181.5px;top:541px">Vp:3.76<i class="z">0</i>v</span>
<span class="t yel" style="left:181.5px;top:561px">Vk:2.126v</span>
<span class="t yel" style="left:181.5px;top:581px">V:1.418v</span>

<!-- bottom band -->
<div style="left:319px;top:538px;width:480px;height:60px;background:#0060A0"></div>
<div class="pill" style="left:319.5px;top:519.5px;width:98.5px"></div>
<span class="t wht" style="left:333.5px;top:522px">M:5<i class="z">0</i><i class="z">0</i>ns</span>

<div class="pill" style="left:665px;top:519.5px;width:129px"></div>
<svg style="left:667.5px;top:520.5px" width="16" height="16" viewBox="0 0 16 16"><circle cx="7.9" cy="7.9" r="7.9" fill="#F00000"/><path d="M5.2 6.5 L8.4 3.3 V13.1" fill="none" stroke="#000" stroke-width="1.45"/></svg>
<svg style="left:684px;top:520px" width="24" height="18" viewBox="0 0 24 18" shape-rendering="crispEdges">
<path d="M1.5 15.5 H9.5 L13.5 2.5 H21" fill="none" stroke="#F0F0F0" stroke-width="1.2" shape-rendering="auto"/>
</svg>
<span class="t wht" style="left:706.5px;top:523px">2.<i class="z">0</i>8V</span>

<!-- buttons -->
<div style="left:321px;top:540px;width:92px;height:58px;background:#0038A0;border-radius:3px"></div><div style="left:323px;top:541px;width:89.5px;height:56px;background:#003860;border-radius:3px"></div><div style="left:323px;top:541px;width:88px;height:54.5px;background:#68ACE8;border-radius:3px"></div><div style="left:324px;top:542px;width:86.5px;height:53px;background:#0080E0;border-radius:2px"></div>
<span class="t" style="left:346.5px;top:550px;color:#000;-webkit-text-stroke:0.2px #0080E0">Type</span>
<div style="left:341px;top:571px;width:50px;height:20px;background:#E4E4E4"></div>
<span class="t" style="left:341.5px;top:574px;color:#000;-webkit-text-stroke:0.2px #E4E4E4">Image</span>

<div style="left:596px;top:540px;width:92px;height:58px;background:#0038A0;border-radius:3px"></div><div style="left:598px;top:541px;width:89.5px;height:56px;background:#003860;border-radius:3px"></div><div style="left:598px;top:541px;width:88px;height:54.5px;background:#68ACE8;border-radius:3px"></div><div style="left:599px;top:542px;width:86.5px;height:53px;background:#0080E0;border-radius:2px"></div>
<span class="t" style="left:621px;top:562px;color:#000;-webkit-text-stroke:0.2px #0080E0">Save</span>
</body></html>
